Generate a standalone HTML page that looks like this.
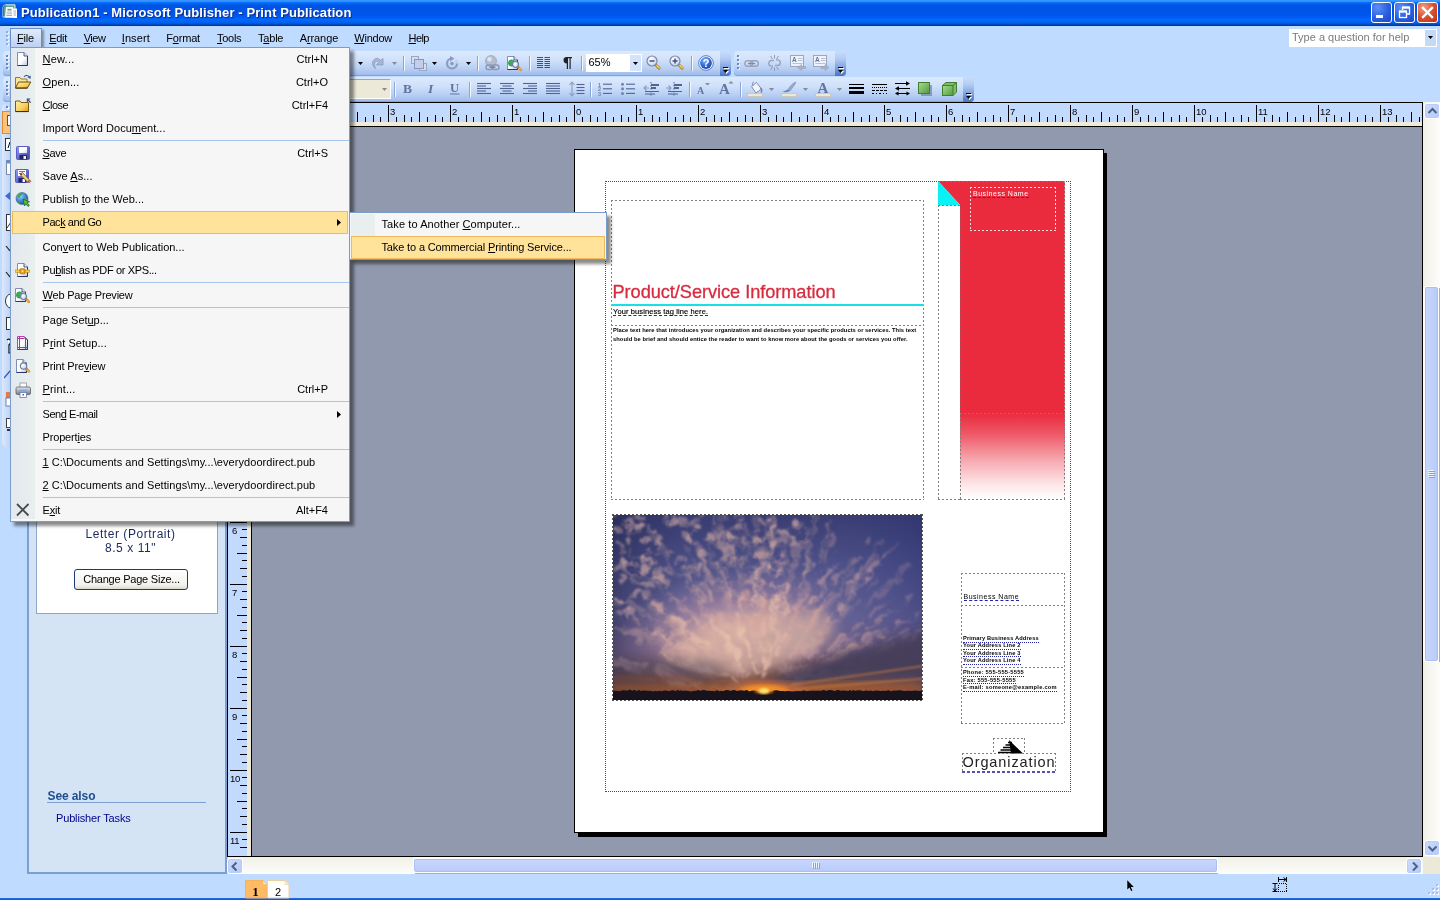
<!DOCTYPE html><html><head><meta charset="utf-8"><title>Publication1 - Microsoft Publisher - Print Publication</title><style>
*{box-sizing:border-box;margin:0;padding:0}
html,body{width:1440px;height:900px;overflow:hidden;background:#bfdbff;font-family:"Liberation Sans",sans-serif;font-size:11px;color:#000}
.abs{position:absolute}
svg{position:absolute;overflow:visible}
#title{left:0;top:0;width:1440px;height:26px;background:linear-gradient(to bottom,#3a96ff 0%,#3593ff 4%,#288eff 6%,#127dff 8%,#036ffc 10%,#0262ee 14%,#0057e5 20%,#0054e3 24%,#0055eb 56%,#005bf5 66%,#026afe 76%,#0062ef 86%,#0052d6 92%,#0040ab 96%,#003092 100%)}
#title .t{left:21px;top:5px;color:#fff;font-weight:bold;font-size:13px;letter-spacing:.1px;text-shadow:1px 1px 1px #0a2a8a;white-space:nowrap}
.tb{top:2px;width:21px;height:21px;border:1px solid #fff;border-radius:3px;background:radial-gradient(circle at 30% 25%,#5d8ff5 0%,#2a5fe0 55%,#1c47c0 100%)}
.tb.x{background:radial-gradient(circle at 30% 25%,#f0a088 0%,#d9502f 50%,#b8321a 100%)}
#menubar{left:0;top:26px;width:1440px;height:22px;background:#bfdbff}
.mi{top:6px;white-space:nowrap}
u{text-decoration:underline;text-underline-offset:1px}
.tbar{height:25px;background:linear-gradient(to bottom,#ddeafd 0%,#d0e1fb 35%,#b9d0f4 70%,#9bb9ea 100%);border-radius:0 4px 4px 0;box-shadow:inset 0 -1px 0 #84a3dc}
.cap{width:11px;height:25px;background:linear-gradient(to bottom,#c9ddfb 0%,#b3ccf4 30%,#8aaae4 60%,#5f87d2 85%,#4a73c2 100%);border-radius:0 4px 4px 0}
.tsep{width:2px;height:15px;border-left:1px solid #8aa5d8;border-right:1px solid #f4f8ff}
#work{left:252px;top:127px;width:1170px;height:729px;background:#9199ae}
#menu{left:10px;top:47px;width:340px;height:475px;background:#f6f6f6;border:1px solid #7a9ccb;box-shadow:4px 4px 3px rgba(0,0,0,.45)}
#menu .strip{left:0px;top:0px;width:24px;height:471px;background:linear-gradient(to right,#e3e9ee,#e9eeee)}
.it{left:31.5px;white-space:nowrap;height:13px;line-height:13px}
.sc{right:21px;white-space:nowrap;height:13px;line-height:13px}
.sep{left:32px;width:306px;height:1px;background:#a6c5ec}
.hl{background:#ffe39b;border:1px solid #f0b95a}
#sub{left:349px;top:212px;width:258px;height:48px;background:#f6f6f6;border:1px solid #7a9ccb;box-shadow:4px 4px 3px rgba(0,0,0,.45)}
#pane{left:27px;top:102px;width:200px;height:772px;background:#d5e4f5;border:2px solid #7b9fd0}
.sbtn{width:16px;height:16px;border:1px solid #fff;border-radius:3px;background:linear-gradient(135deg,#cddcfd,#b5c9f8);box-shadow:0 0 0 1px #b9cdf5 inset}
.thumb{border:1px solid #fff;border-radius:3px;background:#c3d5fd;box-shadow:0 0 0 1px #aac0f3 inset}
.df{border:1px dashed #777}
.pt{white-space:nowrap;position:absolute;line-height:1}
</style></head><body><div id="root" class="abs" style="left:0;top:0;width:1440px;height:900px;overflow:hidden;background:#bfdbff;opacity:.999">
<svg width="0" height="0" style="left:0;top:0"><defs>
<linearGradient id="gPage" x1="0" y1="0" x2="1" y2="1"><stop offset="0" stop-color="#fff"/><stop offset=".55" stop-color="#fdfdff"/><stop offset="1" stop-color="#b9c3e2"/></linearGradient>
<linearGradient id="gFold" x1="0" y1="0" x2="1" y2="1"><stop offset="0" stop-color="#fff1b0"/><stop offset=".6" stop-color="#f7cf5a"/><stop offset="1" stop-color="#d99a1a"/></linearGradient>
<linearGradient id="gFlop" x1="0" y1="0" x2="1" y2="1"><stop offset="0" stop-color="#9a9ef2"/><stop offset=".5" stop-color="#686cd4"/><stop offset="1" stop-color="#4042a2"/></linearGradient>
<linearGradient id="gGray" x1="0" y1="0" x2="0" y2="1"><stop offset="0" stop-color="#e8e8ec"/><stop offset="1" stop-color="#77787e"/></linearGradient>
<radialGradient id="gGlobe" cx=".35" cy=".3" r=".8"><stop offset="0" stop-color="#9ad0ff"/><stop offset=".6" stop-color="#3a7ad0"/><stop offset="1" stop-color="#1f4a9a"/></radialGradient>
<radialGradient id="gLens" cx=".35" cy=".3" r=".8"><stop offset="0" stop-color="#fff"/><stop offset="1" stop-color="#c2d2ec"/></radialGradient>
<radialGradient id="gHelp" cx=".4" cy=".3" r=".8"><stop offset="0" stop-color="#8fc0ff"/><stop offset=".5" stop-color="#2f6fe0"/><stop offset="1" stop-color="#1a3fa0"/></radialGradient>
<linearGradient id="gGreen" x1="0" y1="0" x2="1" y2="1"><stop offset="0" stop-color="#a9dc94"/><stop offset="1" stop-color="#4f9a3a"/></linearGradient>
</defs></svg>
<div id="title" class="abs"><svg width="16" height="16" viewBox="0 0 16 16" style="left:2px;top:4px;"><path d="M1 13V3.500Q1 .8 4 .8h9v12.500z" fill="#6aa396" stroke="#d8eeea" stroke-width="1"/><path d="M1.500 12.500V4Q1.500 1.500 4 1.500" fill="none" stroke="#3f7f72" stroke-width="1.200"/><path d="M11 4.500h4v9.500h-4z" fill="#fff"/><path d="M11.500 7h2.500M11.500 9h2.500M11.500 11h2.500" stroke="#9aa8b0" stroke-width=".9"/><path d="M4 3h7v10.500H3z" fill="#fff"/><rect x="5.500" y="4.800" width="4" height="1.700" fill="#5f9f92"/><path d="M4.800 8h5.200M4.600 9.800h5.400M4.400 11.500h5.600" stroke="#9aa8b0" stroke-width=".9"/></svg><div class="abs t">Publication1 - Microsoft Publisher - Print Publication</div>
<div class="abs tb" style="left:1371px"><svg width="19" height="19" viewBox="0 0 19 19" style=""><rect x="4" y="12" width="7" height="3" fill="#fff"/></svg></div>
<div class="abs tb" style="left:1394px"><svg width="19" height="19" viewBox="0 0 19 19" style=""><path d="M7.500 7V4.500h7v6.500h-2.500" fill="none" stroke="#fff" stroke-width="1.300"/><path d="M7 4.500h8" stroke="#fff" stroke-width="2.200"/><rect x="4.500" y="8.500" width="7" height="6" fill="none" stroke="#fff" stroke-width="1.300"/><path d="M4 8.500h8" stroke="#fff" stroke-width="2.200"/></svg></div>
<div class="abs tb x" style="left:1417px"><svg width="19" height="19" viewBox="0 0 19 19" style=""><path d="M5 5l9 9M14 5l-9 9" stroke="#fff" stroke-width="2.300" stroke-linecap="square"/></svg></div>
</div>
<div id="menubar" class="abs">
<svg width="3" height="16" viewBox="0 0 3 16" style="left:6px;top:5px;"><rect x="1" y="1" width="2" height="2" fill="#fff" opacity=".7"/><rect x="0" y="0" width="2" height="2" fill="#93acdc"/><rect x="1" y="5" width="2" height="2" fill="#fff" opacity=".7"/><rect x="0" y="4" width="2" height="2" fill="#93acdc"/><rect x="1" y="9" width="2" height="2" fill="#fff" opacity=".7"/><rect x="0" y="8" width="2" height="2" fill="#93acdc"/><rect x="1" y="13" width="2" height="2" fill="#fff" opacity=".7"/><rect x="0" y="12" width="2" height="2" fill="#93acdc"/></svg>
<div class="abs" style="left:10px;top:2px;width:32px;height:19px;border:1px solid #6b8fcb;border-bottom:none;background:linear-gradient(to bottom,#e0ebfb,#bdd1f2);box-shadow:2px 2px 2px rgba(0,0,0,.35)"></div>
<div class="abs mi" style="left:17px;letter-spacing:-0.244px"><u>F</u>ile</div>
<div class="abs mi" style="left:49.2px;letter-spacing:-0.302px"><u>E</u>dit</div>
<div class="abs mi" style="left:83.7px;letter-spacing:-0.474px"><u>V</u>iew</div>
<div class="abs mi" style="left:121.7px;letter-spacing:0.123px"><u>I</u>nsert</div>
<div class="abs mi" style="left:166.2px;letter-spacing:-0.181px">F<u>o</u>rmat</div>
<div class="abs mi" style="left:217px;letter-spacing:-0.286px"><u>T</u>ools</div>
<div class="abs mi" style="left:258px;letter-spacing:-0.21px">T<u>a</u>ble</div>
<div class="abs mi" style="left:299.7px;letter-spacing:-0.091px">A<u>r</u>range</div>
<div class="abs mi" style="left:354.3px;letter-spacing:-0.238px"><u>W</u>indow</div>
<div class="abs mi" style="left:408.5px;letter-spacing:-0.581px"><u>H</u>elp</div>
<div class="abs" style="left:1289px;top:3px;width:148px;height:18px;background:#fff;color:#7b7b7b;padding:2px 0 0 3px;white-space:nowrap">Type a question for help</div>
<div class="abs" style="left:1425px;top:4px;width:11px;height:16px;background:#c4d8f8"></div><svg width="5" height="3" viewBox="0 0 5 3" style="left:1428px;top:10px;"><path d="M0 0h5L2.5 3z" fill="#000"/></svg>
</div>
<div class="abs tbar" style="left:3px;top:51px;width:728px;border-radius:4px"></div>
<div class="abs tbar" style="left:3px;top:77px;width:971px;border-radius:4px"></div>
<svg width="3" height="16" viewBox="0 0 3 16" style="left:6px;top:55px;"><rect x="1" y="1" width="2" height="2" fill="#fff" opacity=".7"/><rect x="0" y="0" width="2" height="2" fill="#6f86b8"/><rect x="1" y="5" width="2" height="2" fill="#fff" opacity=".7"/><rect x="0" y="4" width="2" height="2" fill="#6f86b8"/><rect x="1" y="9" width="2" height="2" fill="#fff" opacity=".7"/><rect x="0" y="8" width="2" height="2" fill="#6f86b8"/><rect x="1" y="13" width="2" height="2" fill="#fff" opacity=".7"/><rect x="0" y="12" width="2" height="2" fill="#6f86b8"/></svg>
<svg width="3" height="16" viewBox="0 0 3 16" style="left:6px;top:81px;"><rect x="1" y="1" width="2" height="2" fill="#fff" opacity=".7"/><rect x="0" y="0" width="2" height="2" fill="#6f86b8"/><rect x="1" y="5" width="2" height="2" fill="#fff" opacity=".7"/><rect x="0" y="4" width="2" height="2" fill="#6f86b8"/><rect x="1" y="9" width="2" height="2" fill="#fff" opacity=".7"/><rect x="0" y="8" width="2" height="2" fill="#6f86b8"/><rect x="1" y="13" width="2" height="2" fill="#fff" opacity=".7"/><rect x="0" y="12" width="2" height="2" fill="#6f86b8"/></svg>
<div class="abs cap" style="left:720px;top:51px"></div><svg width="7" height="8" viewBox="0 0 7 8" style="left:722px;top:66px;"><path d="M1 1h5v1h-5zM1 4h5l-2.500 3z" fill="#fff" transform="translate(1,1)"/><path d="M1 1h5v1h-5zM1 4h5l-2.500 3z" fill="#000"/></svg>
<div class="abs tbar" style="left:734px;top:51px;width:112px;border-radius:4px"></div>
<div class="abs cap" style="left:835px;top:51px"></div><svg width="7" height="8" viewBox="0 0 7 8" style="left:837px;top:66px;"><path d="M1 1h5v1h-5zM1 4h5l-2.500 3z" fill="#fff" transform="translate(1,1)"/><path d="M1 1h5v1h-5zM1 4h5l-2.500 3z" fill="#000"/></svg>
<div class="abs cap" style="left:963px;top:77px"></div><svg width="7" height="8" viewBox="0 0 7 8" style="left:965px;top:92px;"><path d="M1 1h5v1h-5zM1 4h5l-2.500 3z" fill="#fff" transform="translate(1,1)"/><path d="M1 1h5v1h-5zM1 4h5l-2.500 3z" fill="#000"/></svg>
<svg width="3" height="16" viewBox="0 0 3 16" style="left:737px;top:55px;"><rect x="1" y="1" width="2" height="2" fill="#fff" opacity=".7"/><rect x="0" y="0" width="2" height="2" fill="#6f86b8"/><rect x="1" y="5" width="2" height="2" fill="#fff" opacity=".7"/><rect x="0" y="4" width="2" height="2" fill="#6f86b8"/><rect x="1" y="9" width="2" height="2" fill="#fff" opacity=".7"/><rect x="0" y="8" width="2" height="2" fill="#6f86b8"/><rect x="1" y="13" width="2" height="2" fill="#fff" opacity=".7"/><rect x="0" y="12" width="2" height="2" fill="#6f86b8"/></svg>
<svg width="5" height="3" viewBox="0 0 5 3" style="left:358.0px;top:62px;"><path d="M0 0h5L2.500 3z" fill="#000"/></svg>
<svg width="13" height="12" viewBox="0 0 13 12" style="left:371px;top:57px;"><path d="M4.500 11.500C1 9 .5 4.500 3.500 2.200 6 .4 8.500 1.500 9.500 3.500L12 1.500v6.500H5.500l2.200-2.500C6.500 4 5.200 3.800 4.300 4.800 3 6.300 3.300 9 4.500 11.500z" fill="#a9b7d6" stroke="#8194bf" stroke-width=".7"/></svg>
<svg width="5" height="3" viewBox="0 0 5 3" style="left:391.5px;top:62px;"><path d="M0 0h5L2.500 3z" fill="#8a8a8a"/></svg>
<div class="abs tsep" style="left:403px;top:56px"></div>
<svg width="16" height="15" viewBox="0 0 16 15" style="left:411px;top:56px;"><rect x=".5" y=".5" width="7" height="7" fill="#d5def0" stroke="#98a7c8"/><rect x="8.500" y="7.500" width="7" height="7" fill="#d5def0" stroke="#98a7c8"/><rect x="3.500" y="3.500" width="9" height="9" fill="#c3cfe8" stroke="#8596bd"/></svg>
<svg width="5" height="3" viewBox="0 0 5 3" style="left:431.5px;top:62px;"><path d="M0 0h5L2.500 3z" fill="#000"/></svg>
<svg width="14" height="14" viewBox="0 0 14 14" style="left:445px;top:56px;"><path d="M7 2.500a5 5 0 1 0 5 5" fill="none" stroke="#8a9bc0" stroke-width="2.200"/><path d="M5 0l4.500 2.500L5 5.500z" fill="#8a9bc0"/><circle cx="7" cy="7.500" r="1.800" fill="#8a9bc0"/><path d="M10 5h3M10.500 7h3" stroke="#b5c2dd" stroke-width="1"/></svg>
<svg width="5" height="3" viewBox="0 0 5 3" style="left:465.5px;top:62px;"><path d="M0 0h5L2.500 3z" fill="#000"/></svg>
<div class="abs tsep" style="left:477px;top:56px"></div>
<svg width="16" height="16" viewBox="0 0 16 16" style="left:484px;top:55px;"><circle cx="7" cy="6" r="5.500" fill="#b4bccf" stroke="#8c97b3" stroke-width=".6"/><circle cx="5.500" cy="4.200" r="2.200" fill="#dfe4ee"/><rect x="2" y="10" width="7" height="4.500" rx="2.200" fill="none" stroke="#8c97b3" stroke-width="1.400"/><rect x="8" y="10" width="7" height="4.500" rx="2.200" fill="none" stroke="#8c97b3" stroke-width="1.400"/><path d="M5.500 12.200h6" stroke="#6f7a99" stroke-width="1.200"/></svg>
<svg width="16" height="16" viewBox="0 0 16 16" style="left:507px;top:55px;"><g transform="translate(-2,0)"><path d="M2.5 1.5h6.5l3.5 3.5v9.500h-10z" fill="url(#gPage)" stroke="#7f8fb8"/><path d="M2.5 14.5h10v-9.500" fill="none" stroke="#27376b"/><path d="M9 1.500v3.500h3.500" fill="#dfe5f5" stroke="#27376b" stroke-width=".8"/></g><circle cx="4.500" cy="8" r="3.200" fill="#3cae5c" stroke="#2a8a4a" stroke-width=".5"/><path d="M1.500 8.500c1-.5 2 .5 2.500 0" stroke="#3a7ad0" fill="none"/><path d="M10.6 11.6l3.200 3.200" stroke="#c8862a" stroke-width="2.600" stroke-linecap="round"/><path d="M12.4 13.4l1.400 1.400" stroke="#f3b552" stroke-width="1.400" stroke-linecap="round"/><circle cx="8.5" cy="9.5" r="3" fill="url(#gLens)" stroke="#6f7f9f" stroke-width="1.200"/></svg>
<div class="abs tsep" style="left:529px;top:56px"></div>
<svg width="13" height="11" viewBox="0 0 13 11" style="left:537px;top:57px;"><path d="M0 0.5h6M7.500 0.5h5.500" stroke="#3f5078" stroke-width="1"/><path d="M0 2.5h6M7.500 2.5h5.500" stroke="#3f5078" stroke-width="1"/><path d="M0 4.5h6M7.500 4.5h5.500" stroke="#3f5078" stroke-width="1"/><path d="M0 6.5h6M7.500 6.5h5.500" stroke="#3f5078" stroke-width="1"/><path d="M0 8.5h6M7.500 8.5h5.500" stroke="#3f5078" stroke-width="1"/><path d="M0 10.5h6M7.500 10.5h5.500" stroke="#3f5078" stroke-width="1"/></svg>
<svg width="10" height="12" viewBox="0 0 10 12" style="left:562px;top:57px;"><path d="M4 0h6v1.200h-1.300V12h-1.200V1.200h-1.500V12h-1.200V6.500A3.300 3.300 0 0 1 4 0z" fill="#222"/></svg>
<div class="abs tsep" style="left:581px;top:56px"></div>
<div class="abs" style="left:586px;top:54px;width:56px;height:18px;background:#fff"></div><div class="abs" style="left:630px;top:55px;width:11px;height:16px;background:#d4e3fb"></div><div class="abs" style="left:588.500px;top:56px;line-height:13px">65%</div>
<svg width="5" height="3" viewBox="0 0 5 3" style="left:633.0px;top:62px;"><path d="M0 0h5L2.500 3z" fill="#000"/></svg>
<svg width="15" height="15" viewBox="0 0 15 15" style="left:646px;top:55px;"><path d="M9.500 9.500l3.600 3.600" stroke="#b98a2e" stroke-width="3" stroke-linecap="round"/><path d="M10.800 10.400l2.300 2.300" stroke="#f2d27a" stroke-width="1.300" stroke-linecap="round"/><circle cx="6" cy="6" r="5" fill="url(#gLens)" stroke="#7d8aa8" stroke-width="1.200"/><path d="M3.500 6h5" stroke="#3f4f86" stroke-width="1.500"/></svg>
<svg width="15" height="15" viewBox="0 0 15 15" style="left:669px;top:55px;"><path d="M9.500 9.500l3.600 3.600" stroke="#b98a2e" stroke-width="3" stroke-linecap="round"/><path d="M10.800 10.400l2.300 2.300" stroke="#f2d27a" stroke-width="1.300" stroke-linecap="round"/><circle cx="6" cy="6" r="5" fill="url(#gLens)" stroke="#7d8aa8" stroke-width="1.200"/><path d="M3.500 6h5" stroke="#3f4f86" stroke-width="1.500"/><path d="M6 3.500v5" stroke="#3f4f86" stroke-width="1.500"/></svg>
<div class="abs tsep" style="left:691px;top:56px"></div>
<svg width="16" height="16" viewBox="0 0 16 16" style="left:698px;top:55px;"><circle cx="8" cy="8" r="7.300" fill="#fff" stroke="#3458b8" stroke-width=".8"/><circle cx="8" cy="8" r="5.900" fill="url(#gHelp)"/><text x="8" y="12" text-anchor="middle" font-family="Liberation Sans" font-weight="bold" font-size="11" fill="#fff">?</text></svg>
<svg width="15" height="7" viewBox="0 0 15 7" style="left:744px;top:60px;"><rect x=".7" y=".7" width="8" height="5.600" rx="2.800" fill="none" stroke="#9aa3ba" stroke-width="1.400"/><rect x="6.300" y=".7" width="8" height="5.600" rx="2.800" fill="none" stroke="#9aa3ba" stroke-width="1.400"/><path d="M4 3.500h7" stroke="#7f89a5" stroke-width="1.200"/></svg>
<svg width="15" height="16" viewBox="0 0 15 16" style="left:767px;top:55px;"><path d="M7 5.500H4.500a2.800 2.800 0 0 0 0 5.600H6M8 10.500h2.500a2.800 2.800 0 0 0 0-5.600H9" fill="none" stroke="#9aa3ba" stroke-width="1.400"/><path d="M7.500 0v3.500M3.500 1l2 3M11.500 1l-2 3M7.500 16v-3.500M3.500 15l2-3M11.500 15l-2-3" stroke="#7f89a5" stroke-width=".8"/></svg>
<svg width="16" height="16" viewBox="0 0 16 16" style="left:790px;top:55px;"><rect x=".5" y=".5" width="13" height="11" fill="#eef2fa" stroke="#9aa6c2"/><text x="2" y="7" font-family="Liberation Sans" font-weight="bold" font-size="6.500" fill="#6a7696">A</text><path d="M8 3.500h4.500M8 5.500h4.500M2.500 8.500h10" stroke="#aab4cc" stroke-width=".8"/><path d="M15.500 11.500h-4V9.500L7.500 12.500l4 3v-2h4z" fill="#a9b3c9" stroke="#8f9ab5" stroke-width=".5"/></svg>
<svg width="16" height="16" viewBox="0 0 16 16" style="left:813px;top:55px;"><rect x=".5" y=".5" width="13" height="11" fill="#eef2fa" stroke="#9aa6c2"/><text x="2" y="7" font-family="Liberation Sans" font-weight="bold" font-size="6.500" fill="#6a7696">A</text><path d="M8 3.500h4.500M8 5.500h4.500M2.500 8.500h10" stroke="#aab4cc" stroke-width=".8"/><path d="M8 11.500h4V9.500l4 3-4 3v-2H8z" fill="#a9b3c9" stroke="#8f9ab5" stroke-width=".5"/></svg>
<div class="abs" style="left:300px;top:79px;width:91px;height:20px;background:#ece9d8;border:1px solid #a9a69a;border-right-color:#fff;border-bottom-color:#fff"></div>
<svg width="5" height="3" viewBox="0 0 5 3" style="left:381.5px;top:88px;"><path d="M0 0h5L2.500 3z" fill="#8a8a8a"/></svg>
<div class="abs tsep" style="left:394px;top:82px"></div>
<svg width="12" height="12" viewBox="0 0 12 12" style="left:403px;top:82px;"><text x="0" y="10.500" font-family="Liberation Serif" font-weight="bold" fill="#62739f" font-size="13.500">B</text></svg>
<svg width="12" height="12" viewBox="0 0 12 12" style="left:427px;top:82px;"><text x="1" y="10.500" font-family="Liberation Serif" font-weight="bold" fill="#62739f" font-style="italic" font-size="13.500">I</text></svg>
<svg width="12" height="13" viewBox="0 0 12 13" style="left:450px;top:82px;"><text x="0" y="9.800" font-family="Liberation Serif" font-weight="bold" fill="#62739f" font-size="12.500">U</text><path d="M0 12h9.500" stroke="#62739f" stroke-width="1"/></svg>
<div class="abs tsep" style="left:469px;top:82px"></div>
<svg width="14" height="12" viewBox="0 0 14 12" style="left:477px;top:83px;"><path d="M0 0.5h14" stroke="#4f6394" stroke-width="1.100"/><path d="M0 3.0h9" stroke="#4f6394" stroke-width="1.100"/><path d="M0 5.5h14" stroke="#4f6394" stroke-width="1.100"/><path d="M0 8.0h9" stroke="#4f6394" stroke-width="1.100"/><path d="M0 10.5h14" stroke="#4f6394" stroke-width="1.100"/></svg>
<svg width="14" height="12" viewBox="0 0 14 12" style="left:500px;top:83px;"><path d="M0 0.5h14" stroke="#4f6394" stroke-width="1.100"/><path d="M2.5 3.0h9" stroke="#4f6394" stroke-width="1.100"/><path d="M0 5.5h14" stroke="#4f6394" stroke-width="1.100"/><path d="M2.5 8.0h9" stroke="#4f6394" stroke-width="1.100"/><path d="M0 10.5h14" stroke="#4f6394" stroke-width="1.100"/></svg>
<svg width="14" height="12" viewBox="0 0 14 12" style="left:523px;top:83px;"><path d="M0 0.5h14" stroke="#4f6394" stroke-width="1.100"/><path d="M5 3.0h9" stroke="#4f6394" stroke-width="1.100"/><path d="M0 5.5h14" stroke="#4f6394" stroke-width="1.100"/><path d="M5 8.0h9" stroke="#4f6394" stroke-width="1.100"/><path d="M0 10.5h14" stroke="#4f6394" stroke-width="1.100"/></svg>
<svg width="14" height="12" viewBox="0 0 14 12" style="left:546px;top:83px;"><path d="M0 0.5h14" stroke="#4f6394" stroke-width="1.100"/><path d="M0 3.0h14" stroke="#4f6394" stroke-width="1.100"/><path d="M0 5.5h14" stroke="#4f6394" stroke-width="1.100"/><path d="M0 8.0h14" stroke="#4f6394" stroke-width="1.100"/><path d="M0 10.5h14" stroke="#4f6394" stroke-width="1.100"/></svg>
<svg width="16" height="16" viewBox="0 0 16 16" style="left:568.5px;top:81px;"><path d="M3 1v14M.5 4L3 1l2.500 3M.5 12L3 15l2.500-3" fill="none" stroke="#8b9bc0" stroke-width="1.100"/><path d="M7.500 3.5h8" stroke="#4f6394" stroke-width="1.100"/><path d="M7.500 6.5h8" stroke="#4f6394" stroke-width="1.100"/><path d="M7.500 9.5h8" stroke="#4f6394" stroke-width="1.100"/><path d="M7.500 12.5h8" stroke="#4f6394" stroke-width="1.100"/></svg>
<div class="abs tsep" style="left:590px;top:82px"></div>
<svg width="14" height="13" viewBox="0 0 14 13" style="left:598px;top:82px;"><text x="0" y="4.5" font-family="Liberation Sans" font-size="5.500" font-weight="bold" fill="#7184b3">1</text><path d="M5 2.2h9" stroke="#4f6394" stroke-width="1.100"/><text x="0" y="9.1" font-family="Liberation Sans" font-size="5.500" font-weight="bold" fill="#7184b3">2</text><path d="M5 6.8h9" stroke="#4f6394" stroke-width="1.100"/><text x="0" y="13.7" font-family="Liberation Sans" font-size="5.500" font-weight="bold" fill="#7184b3">3</text><path d="M5 11.399999999999999h9" stroke="#4f6394" stroke-width="1.100"/></svg>
<svg width="14" height="13" viewBox="0 0 14 13" style="left:621px;top:82px;"><circle cx="1.500" cy="2.2" r="1.500" fill="#7184b3"/><path d="M5 2.2h9" stroke="#4f6394" stroke-width="1.100"/><circle cx="1.500" cy="6.8" r="1.500" fill="#7184b3"/><path d="M5 6.8h9" stroke="#4f6394" stroke-width="1.100"/><circle cx="1.500" cy="11.399999999999999" r="1.500" fill="#7184b3"/><path d="M5 11.399999999999999h9" stroke="#4f6394" stroke-width="1.100"/></svg>
<svg width="16" height="15" viewBox="0 0 16 15" style="left:643px;top:82px;"><path d="M6 6H1M3.500 3.500L1 6l2.500 2.500" fill="none" stroke="#8b9bc0" stroke-width="1.100"/><path d="M8 0v15" stroke="#4f6394" stroke-width="1" stroke-dasharray="1.500 1.500"/><path d="M8 3h8M8 6h5" stroke="#4f6394" stroke-width="1.800"/><path d="M2 9.500h14M2 12h10" stroke="#4f6394" stroke-width="1.100"/></svg>
<svg width="16" height="15" viewBox="0 0 16 15" style="left:666px;top:82px;"><path d="M0 6h5M2.500 3.500L5 6 2.500 8.500" fill="none" stroke="#8b9bc0" stroke-width="1.100"/><path d="M8 0v15" stroke="#4f6394" stroke-width="1" stroke-dasharray="1.500 1.500"/><path d="M8 3h8M8 6h5" stroke="#4f6394" stroke-width="1.800"/><path d="M2 9.500h14M2 12h10" stroke="#4f6394" stroke-width="1.100"/></svg>
<div class="abs tsep" style="left:689px;top:82px"></div>
<svg width="14" height="14" viewBox="0 0 14 14" style="left:697px;top:81px;"><text x="0" y="13" font-family="Liberation Serif" font-weight="bold" fill="#62739f" font-size="10">A</text><path d="M8 2h5l-2.500 2.500z" fill="#8a8a8a"/></svg>
<svg width="16" height="15" viewBox="0 0 16 15" style="left:719px;top:80px;"><text x="0" y="13.500" font-family="Liberation Serif" font-weight="bold" fill="#62739f" font-size="15">A</text><path d="M9.500 3.500h5L12 1z" fill="#8a8a8a"/></svg>
<div class="abs tsep" style="left:740px;top:82px"></div>
<svg width="16" height="16" viewBox="0 0 16 16" style="left:747px;top:81px;"><path d="M4.500 5.500l5-4 5 6.500-5.500 4z" fill="#f2f4fa" stroke="#7d8db5" stroke-width="1"/><path d="M7 1c-1.500 0-2 2-1 4" fill="none" stroke="#7d8db5"/><path d="M13.500 7c1.500 1 1.500 3 .5 4.500" stroke="#6f83ad" stroke-width="1.500" fill="none"/><rect x=".5" y="12.500" width="15" height="3" fill="#ece9d8" stroke="#c9c4ae" stroke-width=".8"/></svg>
<svg width="5" height="3" viewBox="0 0 5 3" style="left:769.0px;top:88px;"><path d="M0 0h5L2.500 3z" fill="#8a8a8a"/></svg>
<svg width="16" height="16" viewBox="0 0 16 16" style="left:781px;top:81px;"><path d="M15 1c-3 1-6 4-8 7.500l2 1.500C11 7 14 4 15 1z" fill="#9aa8c8" stroke="#7d8db5" stroke-width=".6"/><path d="M7 8.500c-2 .5-3 2-5.500 2 1.500 1 4.500 1 7.500-.5z" fill="#6f83ad"/><rect x=".5" y="12.500" width="15" height="3" fill="#ece9d8" stroke="#c9c4ae" stroke-width=".8"/></svg>
<svg width="5" height="3" viewBox="0 0 5 3" style="left:802.5px;top:88px;"><path d="M0 0h5L2.500 3z" fill="#8a8a8a"/></svg>
<svg width="16" height="16" viewBox="0 0 16 16" style="left:815px;top:81px;"><text x="8" y="11.500" text-anchor="middle" font-family="Liberation Serif" font-weight="bold" fill="#62739f" font-size="15">A</text><rect x=".5" y="12.500" width="15" height="3" fill="#ece9d8" stroke="#c9c4ae" stroke-width=".8"/></svg>
<svg width="5" height="3" viewBox="0 0 5 3" style="left:836.5px;top:88px;"><path d="M0 0h5L2.500 3z" fill="#8a8a8a"/></svg>
<svg width="15" height="11" viewBox="0 0 15 11" style="left:849px;top:84px;"><rect x="0" y="0" width="15" height="1" fill="#000"/><rect x="0" y="3" width="15" height="2" fill="#000"/><rect x="0" y="7" width="15" height="3" fill="#000"/></svg>
<svg width="15" height="11" viewBox="0 0 15 11" style="left:872px;top:84px;"><path d="M0 .5h15" stroke="#000"/><path d="M0 3.500h15" stroke="#000" stroke-dasharray="1 1"/><path d="M0 6.500h15" stroke="#000" stroke-dasharray="3 1"/><path d="M0 9.500h15" stroke="#000" stroke-dasharray="2 2 1 2"/></svg>
<svg width="15" height="15" viewBox="0 0 15 15" style="left:895px;top:81px;"><path d="M0 2.500h13M2 7.500h13M1 12.500h13" stroke="#000" stroke-width="1.200"/><path d="M15 2.500l-4-2.200v4.400zM0 7.500l4-2.200v4.400zM0 12.500l3.500-2v4zM15 12.500l-3.500-2v4z" fill="#000"/></svg>
<svg width="15" height="14" viewBox="0 0 15 14" style="left:918px;top:82px;"><rect x="3" y="3" width="11" height="11" fill="#5c6c8c" opacity=".55"/><rect x=".5" y=".5" width="11" height="11" fill="url(#gGreen)" stroke="#3f7f2f"/></svg>
<svg width="15" height="14" viewBox="0 0 15 14" style="left:942px;top:82px;"><path d="M.5 3.500L4 .5h10.500v9.500l-3.500 3.500H.5z" fill="#7dbf68" stroke="#3f7f2f"/><rect x=".5" y="3.500" width="10.500" height="10" fill="url(#gGreen)" stroke="#3f7f2f"/><path d="M11 3.500L14.500 .5" stroke="#3f7f2f"/></svg>
<div class="abs" style="left:227px;top:102px;width:1196px;height:25px;background:#c2dafd;border-top:1px solid #000;border-bottom:1px solid #000"><div class="abs" style="left:0;bottom:0;width:100%;height:4px;background:#efebd7"></div></div>
<svg width="1170" height="19" viewBox="0 0 1170 19" style="left:252px;top:103px;"><g fill="#000"><rect x="4" y="14" width="1" height="5"/><rect x="12" y="2" width="1" height="17"/><rect x="20" y="14" width="1" height="5"/><rect x="28" y="12" width="1" height="7"/><rect x="35" y="14" width="1" height="5"/><rect x="43" y="9" width="1" height="10"/><rect x="51" y="14" width="1" height="5"/><rect x="59" y="12" width="1" height="7"/><rect x="66" y="14" width="1" height="5"/><rect x="74" y="2" width="1" height="17"/><rect x="82" y="14" width="1" height="5"/><rect x="90" y="12" width="1" height="7"/><rect x="97" y="14" width="1" height="5"/><rect x="105" y="9" width="1" height="10"/><rect x="113" y="14" width="1" height="5"/><rect x="121" y="12" width="1" height="7"/><rect x="128" y="14" width="1" height="5"/><rect x="136" y="2" width="1" height="17"/><rect x="144" y="14" width="1" height="5"/><rect x="152" y="12" width="1" height="7"/><rect x="159" y="14" width="1" height="5"/><rect x="167" y="9" width="1" height="10"/><rect x="175" y="14" width="1" height="5"/><rect x="183" y="12" width="1" height="7"/><rect x="190" y="14" width="1" height="5"/><rect x="198" y="2" width="1" height="17"/><rect x="206" y="14" width="1" height="5"/><rect x="214" y="12" width="1" height="7"/><rect x="221" y="14" width="1" height="5"/><rect x="229" y="9" width="1" height="10"/><rect x="237" y="14" width="1" height="5"/><rect x="245" y="12" width="1" height="7"/><rect x="252" y="14" width="1" height="5"/><rect x="260" y="2" width="1" height="17"/><rect x="268" y="14" width="1" height="5"/><rect x="276" y="12" width="1" height="7"/><rect x="283" y="14" width="1" height="5"/><rect x="291" y="9" width="1" height="10"/><rect x="299" y="14" width="1" height="5"/><rect x="307" y="12" width="1" height="7"/><rect x="314" y="14" width="1" height="5"/><rect x="322" y="2" width="1" height="17"/><rect x="330" y="14" width="1" height="5"/><rect x="338" y="12" width="1" height="7"/><rect x="345" y="14" width="1" height="5"/><rect x="353" y="9" width="1" height="10"/><rect x="361" y="14" width="1" height="5"/><rect x="369" y="12" width="1" height="7"/><rect x="376" y="14" width="1" height="5"/><rect x="384" y="2" width="1" height="17"/><rect x="392" y="14" width="1" height="5"/><rect x="400" y="12" width="1" height="7"/><rect x="407" y="14" width="1" height="5"/><rect x="415" y="9" width="1" height="10"/><rect x="423" y="14" width="1" height="5"/><rect x="431" y="12" width="1" height="7"/><rect x="438" y="14" width="1" height="5"/><rect x="446" y="2" width="1" height="17"/><rect x="454" y="14" width="1" height="5"/><rect x="462" y="12" width="1" height="7"/><rect x="469" y="14" width="1" height="5"/><rect x="477" y="9" width="1" height="10"/><rect x="485" y="14" width="1" height="5"/><rect x="493" y="12" width="1" height="7"/><rect x="500" y="14" width="1" height="5"/><rect x="508" y="2" width="1" height="17"/><rect x="516" y="14" width="1" height="5"/><rect x="524" y="12" width="1" height="7"/><rect x="531" y="14" width="1" height="5"/><rect x="539" y="9" width="1" height="10"/><rect x="547" y="14" width="1" height="5"/><rect x="555" y="12" width="1" height="7"/><rect x="562" y="14" width="1" height="5"/><rect x="570" y="2" width="1" height="17"/><rect x="578" y="14" width="1" height="5"/><rect x="586" y="12" width="1" height="7"/><rect x="593" y="14" width="1" height="5"/><rect x="601" y="9" width="1" height="10"/><rect x="609" y="14" width="1" height="5"/><rect x="617" y="12" width="1" height="7"/><rect x="624" y="14" width="1" height="5"/><rect x="632" y="2" width="1" height="17"/><rect x="640" y="14" width="1" height="5"/><rect x="648" y="12" width="1" height="7"/><rect x="655" y="14" width="1" height="5"/><rect x="663" y="9" width="1" height="10"/><rect x="671" y="14" width="1" height="5"/><rect x="679" y="12" width="1" height="7"/><rect x="686" y="14" width="1" height="5"/><rect x="694" y="2" width="1" height="17"/><rect x="702" y="14" width="1" height="5"/><rect x="710" y="12" width="1" height="7"/><rect x="717" y="14" width="1" height="5"/><rect x="725" y="9" width="1" height="10"/><rect x="733" y="14" width="1" height="5"/><rect x="741" y="12" width="1" height="7"/><rect x="748" y="14" width="1" height="5"/><rect x="756" y="2" width="1" height="17"/><rect x="764" y="14" width="1" height="5"/><rect x="772" y="12" width="1" height="7"/><rect x="779" y="14" width="1" height="5"/><rect x="787" y="9" width="1" height="10"/><rect x="795" y="14" width="1" height="5"/><rect x="803" y="12" width="1" height="7"/><rect x="810" y="14" width="1" height="5"/><rect x="818" y="2" width="1" height="17"/><rect x="826" y="14" width="1" height="5"/><rect x="834" y="12" width="1" height="7"/><rect x="841" y="14" width="1" height="5"/><rect x="849" y="9" width="1" height="10"/><rect x="857" y="14" width="1" height="5"/><rect x="865" y="12" width="1" height="7"/><rect x="872" y="14" width="1" height="5"/><rect x="880" y="2" width="1" height="17"/><rect x="888" y="14" width="1" height="5"/><rect x="896" y="12" width="1" height="7"/><rect x="903" y="14" width="1" height="5"/><rect x="911" y="9" width="1" height="10"/><rect x="919" y="14" width="1" height="5"/><rect x="927" y="12" width="1" height="7"/><rect x="934" y="14" width="1" height="5"/><rect x="942" y="2" width="1" height="17"/><rect x="950" y="14" width="1" height="5"/><rect x="958" y="12" width="1" height="7"/><rect x="965" y="14" width="1" height="5"/><rect x="973" y="9" width="1" height="10"/><rect x="981" y="14" width="1" height="5"/><rect x="989" y="12" width="1" height="7"/><rect x="996" y="14" width="1" height="5"/><rect x="1004" y="2" width="1" height="17"/><rect x="1012" y="14" width="1" height="5"/><rect x="1020" y="12" width="1" height="7"/><rect x="1027" y="14" width="1" height="5"/><rect x="1035" y="9" width="1" height="10"/><rect x="1043" y="14" width="1" height="5"/><rect x="1051" y="12" width="1" height="7"/><rect x="1058" y="14" width="1" height="5"/><rect x="1066" y="2" width="1" height="17"/><rect x="1074" y="14" width="1" height="5"/><rect x="1082" y="12" width="1" height="7"/><rect x="1089" y="14" width="1" height="5"/><rect x="1097" y="9" width="1" height="10"/><rect x="1105" y="14" width="1" height="5"/><rect x="1113" y="12" width="1" height="7"/><rect x="1120" y="14" width="1" height="5"/><rect x="1128" y="2" width="1" height="17"/><rect x="1136" y="14" width="1" height="5"/><rect x="1144" y="12" width="1" height="7"/><rect x="1151" y="14" width="1" height="5"/><rect x="1159" y="9" width="1" height="10"/><rect x="1167" y="14" width="1" height="5"/></g></svg>
<div class="abs" style="left:266px;top:107px;font-size:9.500px;line-height:10px">5</div><div class="abs" style="left:328px;top:107px;font-size:9.500px;line-height:10px">4</div><div class="abs" style="left:390px;top:107px;font-size:9.500px;line-height:10px">3</div><div class="abs" style="left:452px;top:107px;font-size:9.500px;line-height:10px">2</div><div class="abs" style="left:514px;top:107px;font-size:9.500px;line-height:10px">1</div><div class="abs" style="left:576px;top:107px;font-size:9.500px;line-height:10px">0</div><div class="abs" style="left:638px;top:107px;font-size:9.500px;line-height:10px">1</div><div class="abs" style="left:700px;top:107px;font-size:9.500px;line-height:10px">2</div><div class="abs" style="left:762px;top:107px;font-size:9.500px;line-height:10px">3</div><div class="abs" style="left:824px;top:107px;font-size:9.500px;line-height:10px">4</div><div class="abs" style="left:886px;top:107px;font-size:9.500px;line-height:10px">5</div><div class="abs" style="left:948px;top:107px;font-size:9.500px;line-height:10px">6</div><div class="abs" style="left:1010px;top:107px;font-size:9.500px;line-height:10px">7</div><div class="abs" style="left:1072px;top:107px;font-size:9.500px;line-height:10px">8</div><div class="abs" style="left:1134px;top:107px;font-size:9.500px;line-height:10px">9</div><div class="abs" style="left:1196px;top:107px;font-size:9.500px;line-height:10px">10</div><div class="abs" style="left:1258px;top:107px;font-size:9.500px;line-height:10px">11</div><div class="abs" style="left:1320px;top:107px;font-size:9.500px;line-height:10px">12</div><div class="abs" style="left:1382px;top:107px;font-size:9.500px;line-height:10px">13</div>
<div class="abs" style="left:227px;top:126px;width:25px;height:731px;background:#c2dafd;border-left:1px solid #000;border-right:1px solid #000;border-bottom:1px solid #000"><div class="abs" style="right:0;top:0;width:4px;height:100%;background:#efebd7"></div></div>
<svg width="18" height="729" viewBox="0 0 18 729" style="left:229px;top:127px;"><g fill="#000"><rect x="1" y="23" width="17" height="1"/><rect x="13" y="30" width="5" height="1"/><rect x="11" y="38" width="7" height="1"/><rect x="13" y="46" width="5" height="1"/><rect x="8" y="54" width="10" height="1"/><rect x="13" y="61" width="5" height="1"/><rect x="11" y="69" width="7" height="1"/><rect x="13" y="77" width="5" height="1"/><rect x="1" y="85" width="17" height="1"/><rect x="13" y="92" width="5" height="1"/><rect x="11" y="100" width="7" height="1"/><rect x="13" y="108" width="5" height="1"/><rect x="8" y="116" width="10" height="1"/><rect x="13" y="123" width="5" height="1"/><rect x="11" y="131" width="7" height="1"/><rect x="13" y="139" width="5" height="1"/><rect x="1" y="147" width="17" height="1"/><rect x="13" y="154" width="5" height="1"/><rect x="11" y="162" width="7" height="1"/><rect x="13" y="170" width="5" height="1"/><rect x="8" y="178" width="10" height="1"/><rect x="13" y="185" width="5" height="1"/><rect x="11" y="193" width="7" height="1"/><rect x="13" y="201" width="5" height="1"/><rect x="1" y="209" width="17" height="1"/><rect x="13" y="216" width="5" height="1"/><rect x="11" y="224" width="7" height="1"/><rect x="13" y="232" width="5" height="1"/><rect x="8" y="240" width="10" height="1"/><rect x="13" y="247" width="5" height="1"/><rect x="11" y="255" width="7" height="1"/><rect x="13" y="263" width="5" height="1"/><rect x="1" y="271" width="17" height="1"/><rect x="13" y="278" width="5" height="1"/><rect x="11" y="286" width="7" height="1"/><rect x="13" y="294" width="5" height="1"/><rect x="8" y="302" width="10" height="1"/><rect x="13" y="309" width="5" height="1"/><rect x="11" y="317" width="7" height="1"/><rect x="13" y="325" width="5" height="1"/><rect x="1" y="333" width="17" height="1"/><rect x="13" y="340" width="5" height="1"/><rect x="11" y="348" width="7" height="1"/><rect x="13" y="356" width="5" height="1"/><rect x="8" y="364" width="10" height="1"/><rect x="13" y="371" width="5" height="1"/><rect x="11" y="379" width="7" height="1"/><rect x="13" y="387" width="5" height="1"/><rect x="1" y="395" width="17" height="1"/><rect x="13" y="402" width="5" height="1"/><rect x="11" y="410" width="7" height="1"/><rect x="13" y="418" width="5" height="1"/><rect x="8" y="426" width="10" height="1"/><rect x="13" y="433" width="5" height="1"/><rect x="11" y="441" width="7" height="1"/><rect x="13" y="449" width="5" height="1"/><rect x="1" y="457" width="17" height="1"/><rect x="13" y="464" width="5" height="1"/><rect x="11" y="472" width="7" height="1"/><rect x="13" y="480" width="5" height="1"/><rect x="8" y="488" width="10" height="1"/><rect x="13" y="495" width="5" height="1"/><rect x="11" y="503" width="7" height="1"/><rect x="13" y="511" width="5" height="1"/><rect x="1" y="519" width="17" height="1"/><rect x="13" y="526" width="5" height="1"/><rect x="11" y="534" width="7" height="1"/><rect x="13" y="542" width="5" height="1"/><rect x="8" y="550" width="10" height="1"/><rect x="13" y="557" width="5" height="1"/><rect x="11" y="565" width="7" height="1"/><rect x="13" y="573" width="5" height="1"/><rect x="1" y="581" width="17" height="1"/><rect x="13" y="588" width="5" height="1"/><rect x="11" y="596" width="7" height="1"/><rect x="13" y="604" width="5" height="1"/><rect x="8" y="612" width="10" height="1"/><rect x="13" y="619" width="5" height="1"/><rect x="11" y="627" width="7" height="1"/><rect x="13" y="635" width="5" height="1"/><rect x="1" y="643" width="17" height="1"/><rect x="13" y="650" width="5" height="1"/><rect x="11" y="658" width="7" height="1"/><rect x="13" y="666" width="5" height="1"/><rect x="8" y="674" width="10" height="1"/><rect x="13" y="681" width="5" height="1"/><rect x="11" y="689" width="7" height="1"/><rect x="13" y="697" width="5" height="1"/><rect x="1" y="705" width="17" height="1"/><rect x="13" y="712" width="5" height="1"/><rect x="11" y="720" width="7" height="1"/></g></svg>
<div class="abs" style="left:232px;top:154px;font-size:9.500px;line-height:10px;letter-spacing:-.4px">0</div><div class="abs" style="left:232px;top:216px;font-size:9.500px;line-height:10px;letter-spacing:-.4px">1</div><div class="abs" style="left:232px;top:278px;font-size:9.500px;line-height:10px;letter-spacing:-.4px">2</div><div class="abs" style="left:232px;top:340px;font-size:9.500px;line-height:10px;letter-spacing:-.4px">3</div><div class="abs" style="left:232px;top:402px;font-size:9.500px;line-height:10px;letter-spacing:-.4px">4</div><div class="abs" style="left:232px;top:464px;font-size:9.500px;line-height:10px;letter-spacing:-.4px">5</div><div class="abs" style="left:232px;top:526px;font-size:9.500px;line-height:10px;letter-spacing:-.4px">6</div><div class="abs" style="left:232px;top:588px;font-size:9.500px;line-height:10px;letter-spacing:-.4px">7</div><div class="abs" style="left:232px;top:650px;font-size:9.500px;line-height:10px;letter-spacing:-.4px">8</div><div class="abs" style="left:232px;top:712px;font-size:9.500px;line-height:10px;letter-spacing:-.4px">9</div><div class="abs" style="left:230px;top:774px;font-size:9.500px;line-height:10px;letter-spacing:-.4px">10</div><div class="abs" style="left:230px;top:836px;font-size:9.500px;line-height:10px;letter-spacing:-.4px">11</div>
<div class="abs" style="left:227px;top:102px;width:25px;height:25px;background:#c2dafd;border:1px solid #000"></div>
<div id="work" class="abs"></div>
<div class="abs" style="left:578px;top:153px;width:529px;height:684px;background:#000"></div>
<div class="abs" style="left:574px;top:149px;width:530px;height:684px;background:#fff;border:1px solid #000"></div>
<div class="abs" style="left:605px;top:181px;width:466px;height:611px;border:1px dotted #1a52be"></div>
<svg width="313" height="300" viewBox="0 0 313 300" style="left:611px;top:200px;"><path d="M0 .5H313M0 299.5H313M.5 0V300M312.5 0V300" fill="none" stroke="#808080" stroke-width="1" stroke-dasharray="2 2"/></svg>
<div class="abs pt" style="left:612.500px;top:283px;font-size:18.200px;color:#d92a3e;letter-spacing:-.05px;-webkit-text-stroke:.3px #d92a3e">Product/Service Information</div>
<div class="abs" style="left:611px;top:304px;width:313px;height:2px;background:#19e0e6"></div>
<div class="abs pt" style="left:613px;top:307.500px;font-size:7.500px;letter-spacing:.1px;color:#000;-webkit-text-stroke:.15px #000;border-bottom:1px dashed #22a">Your business tag line here.</div>
<svg width="313" height="1" viewBox="0 0 313 1" style="left:611px;top:325px;"><path d="M0 .5H313" fill="none" stroke="#808080" stroke-width="1" stroke-dasharray="2 2"/></svg>
<div class="abs pt" style="left:613px;top:326px;font-size:5.780px;font-weight:bold;letter-spacing:.06px;line-height:8.700px;color:#000">Place text here that introduces your organization and describes your specific products or services. This text<br>should be brief and should entice the reader to want to know more about the goods or services you offer.</div>
<svg width="23" height="319" viewBox="0 0 23 319" style="left:938px;top:181px;"><path d="M0 318.5H23M.5 0V319M22.5 0V319" fill="none" stroke="#808080" stroke-width="1" stroke-dasharray="2 2"/></svg>
<div class="abs" style="left:960px;top:181px;width:105px;height:233px;background:#ea2a3d"></div>
<div class="abs" style="left:960px;top:413px;width:105px;height:86px;background:linear-gradient(to bottom,#ea2a3d 0%,#ee5a68 25%,#f6a9b0 55%,#fde9eb 85%,#fff 100%)"></div>
<svg width="105" height="87" viewBox="0 0 105 87" style="left:960px;top:413px;"><path d="M0 .5H105M0 86.5H105M.5 0V87M104.5 0V87" fill="none" stroke="#808080" stroke-width="1" stroke-dasharray="2 2"/></svg>
<svg width="1" height="232" viewBox="0 0 1 232" style="left:1064px;top:181px;"><path d="M.5 0V232" fill="none" stroke="#9a9a9a" stroke-width="1" stroke-dasharray="2 2"/></svg>
<svg width="23" height="25" viewBox="0 0 23 25" style="left:938px;top:181px;"><path d="M0 0h23v25z" fill="#ea2a3d"/><path d="M0 0v24.500h22.500z" fill="#08f2f6"/></svg>
<svg width="127" height="1" viewBox="0 0 127 1" style="left:938px;top:181px;"><path d="M0 .5H127" fill="none" stroke="#8a6a6e" stroke-width="1" stroke-dasharray="2 2"/></svg>
<svg width="23" height="1" viewBox="0 0 23 1" style="left:938px;top:205px;"><path d="M0 .5H23" fill="none" stroke="#3f9a9a" stroke-width="1" stroke-dasharray="2 2"/></svg>
<svg width="1" height="208" viewBox="0 0 1 208" style="left:960px;top:205px;"><path d="M.5 0V208" fill="none" stroke="#b04a58" stroke-width="1" stroke-dasharray="2 2"/></svg>
<svg width="86" height="44" viewBox="0 0 86 44" style="left:970px;top:187px;"><path d="M0 .5H86M0 43.5H86M.5 0V44M85.5 0V44" fill="none" stroke="#fbe0e3" stroke-width="1" stroke-dasharray="2 2"/></svg>
<div class="abs pt" style="left:973px;top:189.500px;font-size:7px;color:#fff;letter-spacing:.5px;border-bottom:1px dashed #3030b0">Business Name</div>
<svg width="311" height="187" viewBox="0 0 311 187" style="left:612px;top:514px;"><path d="M0 .5H311M0 186.5H311M.5 0V187M310.5 0V187" fill="none" stroke="#555" stroke-width="1" stroke-dasharray="2 2"/></svg>
<svg width="309" height="185" viewBox="0 0 309 185" style="left:613px;top:515px;"><defs>
<linearGradient id="sky" x1="0" y1="0" x2="0" y2="1"><stop offset="0" stop-color="#383c74"/><stop offset=".3" stop-color="#51558f"/><stop offset=".55" stop-color="#69669b"/><stop offset=".74" stop-color="#786487"/><stop offset=".86" stop-color="#7d5448"/><stop offset=".94" stop-color="#96583a"/><stop offset="1" stop-color="#7a4526"/></linearGradient>
<linearGradient id="skx" x1="0" y1="0" x2="1" y2="0"><stop offset="0" stop-color="#1a1d48" stop-opacity=".5"/><stop offset=".22" stop-color="#20244f" stop-opacity=".08"/><stop offset=".7" stop-color="#3a3f88" stop-opacity="0"/><stop offset="1" stop-color="#262c70" stop-opacity=".4"/></linearGradient>
<radialGradient id="sun" cx=".5" cy=".5" r=".5"><stop offset="0" stop-color="#fff39a"/><stop offset=".1" stop-color="#ffd548"/><stop offset=".28" stop-color="#f7a32c" stop-opacity=".95"/><stop offset=".6" stop-color="#e27a3a" stop-opacity=".5"/><stop offset="1" stop-color="#c06a6a" stop-opacity="0"/></radialGradient>
<radialGradient id="glow" cx=".5" cy=".5" r=".5"><stop offset="0" stop-color="#f4c6b6" stop-opacity=".8"/><stop offset=".5" stop-color="#d8a2b2" stop-opacity=".4"/><stop offset="1" stop-color="#a888b4" stop-opacity="0"/></radialGradient>
<filter id="b2" x="-20%" y="-20%" width="140%" height="140%"><feGaussianBlur stdDeviation="2.200"/></filter>
<filter id="b1" x="-20%" y="-20%" width="140%" height="140%"><feGaussianBlur stdDeviation=".8"/></filter>
<filter id="b6" x="-30%" y="-30%" width="160%" height="160%"><feGaussianBlur stdDeviation="6"/></filter>
<filter id="cloudy" x="0" y="0" width="100%" height="100%" filterUnits="userSpaceOnUse" primitiveUnits="userSpaceOnUse">
<feTurbulence type="fractalNoise" baseFrequency=".07" numOctaves="3" seed="4" result="n"/>
<feDisplacementMap in="SourceGraphic" in2="n" scale="16" xChannelSelector="R" yChannelSelector="G" result="d"/>
<feGaussianBlur in="d" stdDeviation="1" result="db"/>
<feColorMatrix in="n" type="matrix" values="0 0 0 0 1 0 0 0 0 1 0 0 0 0 1 0 3.6 0 0 -1.020" result="a"/>
<feComposite in="db" in2="a" operator="in"/>
</filter>
<clipPath id="cp"><rect width="309" height="185"/></clipPath>
</defs>
<g clip-path="url(#cp)">
<rect width="309" height="185" fill="url(#sky)"/>
<rect width="309" height="185" fill="url(#skx)"/>
<ellipse cx="112" cy="112" rx="125" ry="58" fill="url(#glow)" transform="rotate(-14 112 112)"/>
<ellipse cx="136" cy="128" rx="88" ry="30" fill="#f2c0a4" opacity=".5" filter="url(#b6)" transform="rotate(-12 136 128)"/>
<g filter="url(#cloudy)"><rect width="309" height="185" fill="none"/><ellipse cx="49.5" cy="23.7" rx="5.7" ry="4.1" fill="#c4a0a4" opacity="0.58"/><ellipse cx="83.8" cy="75.4" rx="4.9" ry="3.5" fill="#c4a0a4" opacity="0.43"/><ellipse cx="16.5" cy="26.1" rx="4.1" ry="3.0" fill="#c4a0a4" opacity="0.61"/><ellipse cx="40.3" cy="92.6" rx="3.3" ry="2.3" fill="#c4a0a4" opacity="0.65"/><ellipse cx="31.3" cy="66.7" rx="5.0" ry="3.5" fill="#c4a0a4" opacity="0.69"/><ellipse cx="110.3" cy="24.4" rx="4.3" ry="3.1" fill="#c4a0a4" opacity="0.47"/><ellipse cx="47.0" cy="65.6" rx="4.9" ry="3.5" fill="#c4a0a4" opacity="0.67"/><ellipse cx="120.3" cy="74.4" rx="5.0" ry="3.6" fill="#c4a0a4" opacity="0.58"/><ellipse cx="2.7" cy="1.5" rx="3.4" ry="2.4" fill="#c4a0a4" opacity="0.41"/><ellipse cx="145.5" cy="41.7" rx="5.7" ry="4.1" fill="#c4a0a4" opacity="0.69"/><ellipse cx="112.0" cy="37.1" rx="3.5" ry="2.5" fill="#c4a0a4" opacity="0.57"/><ellipse cx="116.7" cy="81.6" rx="4.9" ry="3.5" fill="#c4a0a4" opacity="0.69"/><ellipse cx="169.0" cy="19.9" rx="4.7" ry="3.4" fill="#c4a0a4" opacity="0.43"/><ellipse cx="132.6" cy="30.5" rx="5.7" ry="4.1" fill="#c4a0a4" opacity="0.46"/><ellipse cx="118.4" cy="34.3" rx="3.2" ry="2.3" fill="#c4a0a4" opacity="0.45"/><ellipse cx="149.1" cy="41.7" rx="5.6" ry="4.0" fill="#c4a0a4" opacity="0.38"/><ellipse cx="73.1" cy="107.7" rx="4.2" ry="3.0" fill="#c4a0a4" opacity="0.71"/><ellipse cx="11.4" cy="108.7" rx="4.2" ry="3.0" fill="#c4a0a4" opacity="0.59"/><ellipse cx="37.2" cy="84.9" rx="3.7" ry="2.6" fill="#c4a0a4" opacity="0.55"/><ellipse cx="32.4" cy="47.5" rx="5.6" ry="4.0" fill="#c4a0a4" opacity="0.62"/><ellipse cx="30.1" cy="42.2" rx="5.7" ry="4.1" fill="#c4a0a4" opacity="0.69"/><ellipse cx="52.4" cy="107.9" rx="4.3" ry="3.0" fill="#c4a0a4" opacity="0.54"/><ellipse cx="157.3" cy="19.4" rx="5.6" ry="4.0" fill="#c4a0a4" opacity="0.54"/><ellipse cx="90.8" cy="69.4" rx="3.6" ry="2.6" fill="#c4a0a4" opacity="0.44"/><ellipse cx="131.5" cy="24.2" rx="3.3" ry="2.4" fill="#c4a0a4" opacity="0.40"/><ellipse cx="82.5" cy="51.5" rx="5.1" ry="3.6" fill="#c4a0a4" opacity="0.35"/><ellipse cx="124.9" cy="1.5" rx="5.2" ry="3.7" fill="#c4a0a4" opacity="0.62"/><ellipse cx="26.0" cy="12.3" rx="3.0" ry="2.1" fill="#c4a0a4" opacity="0.65"/><ellipse cx="155.8" cy="48.5" rx="3.4" ry="2.5" fill="#c4a0a4" opacity="0.40"/><ellipse cx="3.8" cy="86.7" rx="4.3" ry="3.1" fill="#c4a0a4" opacity="0.75"/><ellipse cx="96.2" cy="83.1" rx="4.0" ry="2.8" fill="#c4a0a4" opacity="0.44"/><ellipse cx="30.3" cy="56.3" rx="5.8" ry="4.1" fill="#c4a0a4" opacity="0.71"/><ellipse cx="59.8" cy="84.7" rx="4.9" ry="3.5" fill="#c4a0a4" opacity="0.35"/><ellipse cx="183.0" cy="22.4" rx="4.7" ry="3.4" fill="#c4a0a4" opacity="0.45"/><ellipse cx="179.8" cy="25.3" rx="5.1" ry="3.7" fill="#c4a0a4" opacity="0.53"/><ellipse cx="12.3" cy="54.6" rx="6.0" ry="4.3" fill="#c4a0a4" opacity="0.44"/><ellipse cx="76.7" cy="23.8" rx="4.3" ry="3.1" fill="#c4a0a4" opacity="0.48"/><ellipse cx="146.4" cy="26.1" rx="3.8" ry="2.7" fill="#c4a0a4" opacity="0.44"/><ellipse cx="183.7" cy="11.5" rx="4.8" ry="3.4" fill="#c4a0a4" opacity="0.45"/><ellipse cx="98.3" cy="69.3" rx="3.0" ry="2.1" fill="#c4a0a4" opacity="0.62"/><ellipse cx="160.0" cy="11.1" rx="3.9" ry="2.8" fill="#c4a0a4" opacity="0.41"/><ellipse cx="172.1" cy="24.4" rx="3.9" ry="2.8" fill="#c4a0a4" opacity="0.42"/><ellipse cx="79.8" cy="71.6" rx="4.1" ry="3.0" fill="#c4a0a4" opacity="0.40"/><ellipse cx="154.4" cy="57.8" rx="4.2" ry="3.0" fill="#c4a0a4" opacity="0.39"/><ellipse cx="17.8" cy="34.5" rx="4.8" ry="3.4" fill="#c4a0a4" opacity="0.41"/><ellipse cx="133.2" cy="69.1" rx="4.1" ry="2.9" fill="#c4a0a4" opacity="0.74"/><ellipse cx="160.2" cy="30.6" rx="4.3" ry="3.1" fill="#c4a0a4" opacity="0.74"/><ellipse cx="1.4" cy="52.8" rx="5.4" ry="3.8" fill="#c4a0a4" opacity="0.75"/><ellipse cx="18.3" cy="57.3" rx="3.1" ry="2.2" fill="#c4a0a4" opacity="0.75"/><ellipse cx="20.3" cy="64.1" rx="5.0" ry="3.6" fill="#c4a0a4" opacity="0.55"/><ellipse cx="72.1" cy="21.1" rx="5.2" ry="3.7" fill="#c4a0a4" opacity="0.54"/><ellipse cx="96.4" cy="22.2" rx="5.3" ry="3.8" fill="#c4a0a4" opacity="0.36"/><ellipse cx="114.3" cy="45.5" rx="6.2" ry="4.4" fill="#c4a0a4" opacity="0.54"/><ellipse cx="167.6" cy="28.5" rx="3.6" ry="2.6" fill="#c4a0a4" opacity="0.55"/><ellipse cx="46.8" cy="29.3" rx="5.0" ry="3.5" fill="#c4a0a4" opacity="0.74"/><ellipse cx="80.0" cy="73.9" rx="4.4" ry="3.2" fill="#c4a0a4" opacity="0.37"/><ellipse cx="32.0" cy="25.6" rx="4.6" ry="3.3" fill="#c4a0a4" opacity="0.70"/><ellipse cx="27.8" cy="38.6" rx="5.2" ry="3.7" fill="#c4a0a4" opacity="0.66"/><ellipse cx="79.4" cy="24.5" rx="6.1" ry="4.4" fill="#c4a0a4" opacity="0.74"/><ellipse cx="119.7" cy="63.1" rx="5.8" ry="4.2" fill="#c4a0a4" opacity="0.53"/><ellipse cx="30.1" cy="39.9" rx="3.2" ry="2.3" fill="#c4a0a4" opacity="0.54"/><ellipse cx="13.3" cy="50.8" rx="5.1" ry="3.7" fill="#c4a0a4" opacity="0.49"/><ellipse cx="45.2" cy="56.7" rx="5.1" ry="3.6" fill="#c4a0a4" opacity="0.50"/><ellipse cx="56.7" cy="57.1" rx="5.4" ry="3.9" fill="#c4a0a4" opacity="0.50"/><ellipse cx="70.5" cy="45.2" rx="4.9" ry="3.5" fill="#c4a0a4" opacity="0.52"/><ellipse cx="154.7" cy="24.2" rx="3.4" ry="2.5" fill="#c4a0a4" opacity="0.64"/><ellipse cx="169.7" cy="37.6" rx="3.0" ry="2.1" fill="#c4a0a4" opacity="0.66"/><ellipse cx="168.3" cy="47.0" rx="4.6" ry="3.3" fill="#c4a0a4" opacity="0.71"/><ellipse cx="124.3" cy="12.5" rx="6.3" ry="4.5" fill="#c4a0a4" opacity="0.50"/><ellipse cx="73.1" cy="62.0" rx="4.1" ry="2.9" fill="#c4a0a4" opacity="0.48"/><ellipse cx="42.0" cy="17.3" rx="4.0" ry="2.8" fill="#c4a0a4" opacity="0.69"/><ellipse cx="57.5" cy="36.0" rx="3.6" ry="2.6" fill="#c4a0a4" opacity="0.71"/><ellipse cx="60.7" cy="9.6" rx="4.5" ry="3.2" fill="#c4a0a4" opacity="0.74"/><ellipse cx="16.6" cy="16.3" rx="3.9" ry="2.8" fill="#c4a0a4" opacity="0.63"/><ellipse cx="141.4" cy="18.3" rx="3.5" ry="2.5" fill="#c4a0a4" opacity="0.51"/><ellipse cx="182.1" cy="29.8" rx="5.1" ry="3.6" fill="#c4a0a4" opacity="0.71"/><ellipse cx="4.8" cy="87.9" rx="4.9" ry="3.5" fill="#c4a0a4" opacity="0.39"/><ellipse cx="139.7" cy="56.5" rx="5.3" ry="3.8" fill="#c4a0a4" opacity="0.58"/><ellipse cx="21.1" cy="57.8" rx="5.1" ry="3.7" fill="#c4a0a4" opacity="0.65"/><ellipse cx="58.9" cy="76.8" rx="3.5" ry="2.5" fill="#c4a0a4" opacity="0.51"/><ellipse cx="29.8" cy="66.6" rx="4.5" ry="3.2" fill="#c4a0a4" opacity="0.75"/><ellipse cx="73.5" cy="50.0" rx="5.3" ry="3.8" fill="#c4a0a4" opacity="0.48"/><ellipse cx="6.4" cy="31.3" rx="4.2" ry="3.0" fill="#c4a0a4" opacity="0.59"/><ellipse cx="143.5" cy="26.0" rx="5.5" ry="4.0" fill="#c4a0a4" opacity="0.67"/><ellipse cx="15.4" cy="11.5" rx="4.2" ry="3.0" fill="#c4a0a4" opacity="0.61"/><ellipse cx="19.7" cy="39.6" rx="3.3" ry="2.3" fill="#c4a0a4" opacity="0.70"/><ellipse cx="6.8" cy="66.2" rx="3.9" ry="2.8" fill="#c4a0a4" opacity="0.61"/><ellipse cx="47.6" cy="93.1" rx="6.3" ry="4.5" fill="#c4a0a4" opacity="0.67"/><ellipse cx="116.4" cy="21.5" rx="6.1" ry="4.4" fill="#c4a0a4" opacity="0.63"/><ellipse cx="91.8" cy="99.5" rx="3.0" ry="2.2" fill="#c4a0a4" opacity="0.46"/><ellipse cx="115.7" cy="65.4" rx="3.6" ry="2.6" fill="#c4a0a4" opacity="0.37"/><ellipse cx="20.2" cy="49.3" rx="3.1" ry="2.2" fill="#c4a0a4" opacity="0.71"/><ellipse cx="81.4" cy="8.3" rx="5.4" ry="3.9" fill="#c4a0a4" opacity="0.39"/><ellipse cx="96.1" cy="23.1" rx="4.9" ry="3.5" fill="#c4a0a4" opacity="0.62"/><ellipse cx="93.2" cy="54.6" rx="3.2" ry="2.3" fill="#c4a0a4" opacity="0.41"/><ellipse cx="89.6" cy="40.4" rx="5.1" ry="3.6" fill="#c4a0a4" opacity="0.69"/><ellipse cx="3.3" cy="15.3" rx="5.8" ry="4.2" fill="#c4a0a4" opacity="0.60"/><ellipse cx="24.8" cy="3.6" rx="5.4" ry="3.9" fill="#c4a0a4" opacity="0.52"/><ellipse cx="84.7" cy="52.8" rx="4.3" ry="3.1" fill="#c4a0a4" opacity="0.44"/><ellipse cx="151.5" cy="52.3" rx="6.1" ry="4.3" fill="#c4a0a4" opacity="0.74"/><ellipse cx="22.2" cy="79.4" rx="6.1" ry="4.4" fill="#c4a0a4" opacity="0.65"/><ellipse cx="127.8" cy="2.4" rx="5.1" ry="3.7" fill="#c4a0a4" opacity="0.64"/><ellipse cx="82.7" cy="15.3" rx="3.9" ry="2.8" fill="#c4a0a4" opacity="0.71"/><ellipse cx="76.1" cy="8.8" rx="3.8" ry="2.7" fill="#c4a0a4" opacity="0.38"/><ellipse cx="14.2" cy="8.0" rx="5.2" ry="3.7" fill="#c4a0a4" opacity="0.56"/><ellipse cx="13.5" cy="98.1" rx="6.0" ry="4.3" fill="#c4a0a4" opacity="0.52"/><ellipse cx="154.6" cy="42.0" rx="4.9" ry="3.5" fill="#c4a0a4" opacity="0.43"/><ellipse cx="184.9" cy="9.2" rx="5.1" ry="3.7" fill="#c4a0a4" opacity="0.74"/><ellipse cx="57.4" cy="3.9" rx="4.2" ry="3.0" fill="#c4a0a4" opacity="0.67"/><ellipse cx="71.6" cy="96.2" rx="3.9" ry="2.8" fill="#c4a0a4" opacity="0.40"/><ellipse cx="111.5" cy="1.3" rx="4.3" ry="3.1" fill="#c4a0a4" opacity="0.43"/><ellipse cx="145.2" cy="54.5" rx="4.5" ry="3.2" fill="#c4a0a4" opacity="0.53"/><ellipse cx="14.4" cy="95.8" rx="3.4" ry="2.4" fill="#c4a0a4" opacity="0.67"/><ellipse cx="7.8" cy="97.3" rx="3.0" ry="2.2" fill="#c4a0a4" opacity="0.36"/><ellipse cx="60.3" cy="108.2" rx="5.7" ry="4.1" fill="#c4a0a4" opacity="0.54"/><ellipse cx="99.4" cy="26.0" rx="4.4" ry="3.2" fill="#c4a0a4" opacity="0.36"/><ellipse cx="43.8" cy="38.7" rx="2.9" ry="2.1" fill="#c4a0a4" opacity="0.39"/><ellipse cx="36.2" cy="35.2" rx="3.6" ry="2.6" fill="#c4a0a4" opacity="0.74"/><ellipse cx="104.7" cy="64.7" rx="3.6" ry="2.6" fill="#c4a0a4" opacity="0.43"/><ellipse cx="23.1" cy="65.0" rx="5.0" ry="3.6" fill="#c4a0a4" opacity="0.36"/><ellipse cx="88.8" cy="1.6" rx="2.9" ry="2.0" fill="#c4a0a4" opacity="0.65"/><ellipse cx="172.8" cy="17.2" rx="4.1" ry="3.0" fill="#c4a0a4" opacity="0.70"/><ellipse cx="32.2" cy="59.1" rx="5.2" ry="3.7" fill="#c4a0a4" opacity="0.46"/><ellipse cx="37.2" cy="71.6" rx="4.7" ry="3.4" fill="#c4a0a4" opacity="0.61"/><ellipse cx="68.8" cy="83.9" rx="5.3" ry="3.8" fill="#c4a0a4" opacity="0.55"/><ellipse cx="149.1" cy="6.0" rx="6.2" ry="4.4" fill="#c4a0a4" opacity="0.73"/><ellipse cx="22.6" cy="13.8" rx="5.4" ry="3.8" fill="#c4a0a4" opacity="0.49"/><ellipse cx="10.3" cy="48.3" rx="5.8" ry="4.1" fill="#c4a0a4" opacity="0.74"/><ellipse cx="144.3" cy="25.7" rx="3.4" ry="2.4" fill="#c4a0a4" opacity="0.41"/><ellipse cx="118.4" cy="22.2" rx="5.1" ry="3.6" fill="#c4a0a4" opacity="0.73"/><ellipse cx="8.4" cy="37.4" rx="3.6" ry="2.6" fill="#c4a0a4" opacity="0.39"/><ellipse cx="135.7" cy="63.5" rx="3.9" ry="2.8" fill="#c4a0a4" opacity="0.55"/><ellipse cx="159.9" cy="13.6" rx="4.0" ry="2.9" fill="#c4a0a4" opacity="0.66"/><ellipse cx="130.6" cy="42.7" rx="5.5" ry="3.9" fill="#c4a0a4" opacity="0.38"/><ellipse cx="39.4" cy="46.9" rx="3.7" ry="2.6" fill="#c4a0a4" opacity="0.68"/><ellipse cx="167.7" cy="39.9" rx="4.3" ry="3.1" fill="#c4a0a4" opacity="0.50"/><ellipse cx="184.6" cy="21.6" rx="6.2" ry="4.4" fill="#c4a0a4" opacity="0.66"/><ellipse cx="47.9" cy="106.9" rx="3.1" ry="2.2" fill="#c4a0a4" opacity="0.38"/><ellipse cx="68.7" cy="7.9" rx="6.0" ry="4.3" fill="#c4a0a4" opacity="0.57"/><path d="M103.2 74.9L81.8 28.8" stroke="#ad909e" stroke-width="5.8" stroke-linecap="round" opacity="0.45"/><path d="M129.9 53.0L121.4 3.8" stroke="#bd9a9e" stroke-width="3.0" stroke-linecap="round" opacity="0.50"/><path d="M219.5 137.2L241.6 123.3" stroke="#c69ca4" stroke-width="4.2" stroke-linecap="round" opacity="0.23"/><path d="M187.9 138.5L224.7 96.0" stroke="#c69ca4" stroke-width="5.1" stroke-linecap="round" opacity="0.46"/><path d="M241.8 136.9L273.3 121.7" stroke="#d6a6a2" stroke-width="2.5" stroke-linecap="round" opacity="0.26"/><path d="M249.1 68.7L284.7 27.8" stroke="#c69ca4" stroke-width="3.2" stroke-linecap="round" opacity="0.27"/><path d="M126.9 142.6L95.0 94.9" stroke="#cf9fa6" stroke-width="4.8" stroke-linecap="round" opacity="0.44"/><path d="M164.0 141.9L170.5 121.4" stroke="#f0c2ac" stroke-width="2.3" stroke-linecap="round" opacity="0.71"/><path d="M120.6 88.6L105.4 44.3" stroke="#f0c2ac" stroke-width="2.3" stroke-linecap="round" opacity="0.55"/><path d="M150.0 120.3L148.8 83.7" stroke="#e6b4a8" stroke-width="4.8" stroke-linecap="round" opacity="0.42"/><path d="M12.9 145.6L-17.3 138.2" stroke="#ad909e" stroke-width="3.6" stroke-linecap="round" opacity="0.46"/><path d="M179.1 89.6L183.5 74.8" stroke="#dba69f" stroke-width="2.2" stroke-linecap="round" opacity="0.52"/><path d="M119.0 173.3L93.4 168.2" stroke="#cf9fa6" stroke-width="5.3" stroke-linecap="round" opacity="0.51"/><path d="M179.7 97.3L195.6 49.9" stroke="#f0c2ac" stroke-width="2.4" stroke-linecap="round" opacity="0.59"/><path d="M286.3 131.3L304.2 124.8" stroke="#e0b0a0" stroke-width="3.4" stroke-linecap="round" opacity="0.38"/><path d="M202.0 49.2L216.1 12.3" stroke="#e0b0a0" stroke-width="3.2" stroke-linecap="round" opacity="0.31"/><path d="M71.1 119.9L33.0 91.6" stroke="#c4a09c" stroke-width="3.2" stroke-linecap="round" opacity="0.32"/><path d="M289.6 124.8L325.8 110.3" stroke="#c69ca4" stroke-width="3.6" stroke-linecap="round" opacity="0.32"/><path d="M169.7 132.1L185.1 90.6" stroke="#d6a6a2" stroke-width="2.6" stroke-linecap="round" opacity="0.65"/><path d="M168.9 137.9L190.9 83.0" stroke="#c69ca4" stroke-width="4.3" stroke-linecap="round" opacity="0.58"/><path d="M126.8 160.1L99.7 138.7" stroke="#cf9fa6" stroke-width="2.6" stroke-linecap="round" opacity="0.48"/><path d="M158.8 30.2L161.2 -23.1" stroke="#c4a09c" stroke-width="5.9" stroke-linecap="round" opacity="0.46"/><path d="M117.1 131.3L101.2 109.0" stroke="#dba69f" stroke-width="3.9" stroke-linecap="round" opacity="0.37"/><path d="M77.9 132.2L58.5 119.7" stroke="#f0c2ac" stroke-width="5.7" stroke-linecap="round" opacity="0.36"/><path d="M146.5 94.2L143.9 54.6" stroke="#e6b4a8" stroke-width="4.0" stroke-linecap="round" opacity="0.57"/><path d="M68.6 108.8L34.4 79.7" stroke="#c4a09c" stroke-width="5.0" stroke-linecap="round" opacity="0.44"/><path d="M83.5 71.6L69.2 48.8" stroke="#ad909e" stroke-width="5.9" stroke-linecap="round" opacity="0.34"/><path d="M50.8 157.0L10.7 147.8" stroke="#ad909e" stroke-width="2.0" stroke-linecap="round" opacity="0.53"/><path d="M173.3 130.3L184.4 104.5" stroke="#e0b0a0" stroke-width="4.0" stroke-linecap="round" opacity="0.47"/><path d="M97.2 78.4L72.4 32.4" stroke="#bd9a9e" stroke-width="3.4" stroke-linecap="round" opacity="0.52"/><path d="M66.7 60.5L33.0 13.2" stroke="#ad909e" stroke-width="4.1" stroke-linecap="round" opacity="0.47"/><path d="M197.5 132.5L234.5 94.0" stroke="#d6a6a2" stroke-width="3.1" stroke-linecap="round" opacity="0.43"/><path d="M124.6 149.9L90.9 112.9" stroke="#cf9fa6" stroke-width="4.3" stroke-linecap="round" opacity="0.46"/><path d="M120.8 51.3L114.4 24.8" stroke="#bd9a9e" stroke-width="6.0" stroke-linecap="round" opacity="0.29"/><path d="M160.2 76.5L162.2 51.7" stroke="#e6b4a8" stroke-width="4.7" stroke-linecap="round" opacity="0.62"/><path d="M112.4 174.9L57.8 168.0" stroke="#dba69f" stroke-width="2.4" stroke-linecap="round" opacity="0.53"/><path d="M135.8 109.0L129.0 78.9" stroke="#e6b4a8" stroke-width="4.7" stroke-linecap="round" opacity="0.54"/><path d="M235.5 71.1L244.6 59.2" stroke="#e0b0a0" stroke-width="3.6" stroke-linecap="round" opacity="0.38"/><path d="M53.8 132.9L18.1 115.7" stroke="#ad909e" stroke-width="5.9" stroke-linecap="round" opacity="0.47"/><path d="M230.4 135.9L256.8 121.0" stroke="#e0b0a0" stroke-width="4.3" stroke-linecap="round" opacity="0.44"/><path d="M169.7 55.9L175.9 12.5" stroke="#bd9a9e" stroke-width="3.5" stroke-linecap="round" opacity="0.29"/><path d="M171.6 101.4L177.4 78.2" stroke="#e6b4a8" stroke-width="2.5" stroke-linecap="round" opacity="0.44"/><path d="M135.1 173.4L116.6 166.2" stroke="#f4ccb4" stroke-width="4.3" stroke-linecap="round" opacity="0.63"/><path d="M204.8 57.2L220.8 20.1" stroke="#c69ca4" stroke-width="3.7" stroke-linecap="round" opacity="0.38"/><path d="M148.7 68.6L147.8 36.3" stroke="#bd9a9e" stroke-width="5.4" stroke-linecap="round" opacity="0.46"/><path d="M234.3 57.6L255.1 26.6" stroke="#e0b0a0" stroke-width="3.7" stroke-linecap="round" opacity="0.36"/><path d="M214.1 53.7L223.6 34.5" stroke="#b493a4" stroke-width="2.1" stroke-linecap="round" opacity="0.31"/><path d="M185.7 167.4L216.3 156.0" stroke="#e0b0a0" stroke-width="3.9" stroke-linecap="round" opacity="0.34"/><path d="M151.7 157.1L151.1 120.1" stroke="#f0c2ac" stroke-width="5.4" stroke-linecap="round" opacity="0.49"/><path d="M121.1 105.5L104.3 64.8" stroke="#e6b4a8" stroke-width="4.4" stroke-linecap="round" opacity="0.30"/><path d="M197.6 148.8L236.3 122.3" stroke="#d6a6a2" stroke-width="4.5" stroke-linecap="round" opacity="0.38"/><path d="M187.0 69.0L199.5 29.4" stroke="#c4a09c" stroke-width="2.1" stroke-linecap="round" opacity="0.43"/><path d="M133.5 153.6L107.1 116.1" stroke="#cf9fa6" stroke-width="2.8" stroke-linecap="round" opacity="0.68"/><path d="M163.0 86.7L168.5 40.1" stroke="#cf9fa6" stroke-width="4.5" stroke-linecap="round" opacity="0.57"/><path d="M81.8 139.9L42.1 117.3" stroke="#f0c2ac" stroke-width="4.9" stroke-linecap="round" opacity="0.46"/><path d="M109.6 140.3L98.6 129.9" stroke="#f4ccb4" stroke-width="5.1" stroke-linecap="round" opacity="0.45"/><path d="M45.4 92.0L28.9 78.4" stroke="#ad909e" stroke-width="3.9" stroke-linecap="round" opacity="0.51"/><path d="M63.9 167.0L30.2 162.0" stroke="#e6b4a8" stroke-width="4.2" stroke-linecap="round" opacity="0.31"/><path d="M231.0 81.6L262.6 42.1" stroke="#d6a6a2" stroke-width="4.7" stroke-linecap="round" opacity="0.25"/><path d="M155.0 153.1L158.8 120.1" stroke="#e6b4a8" stroke-width="3.9" stroke-linecap="round" opacity="0.74"/><path d="M219.0 101.5L256.6 57.5" stroke="#c69ca4" stroke-width="4.8" stroke-linecap="round" opacity="0.44"/><path d="M105.0 120.5L90.6 102.3" stroke="#dba69f" stroke-width="2.7" stroke-linecap="round" opacity="0.33"/><path d="M212.5 111.6L242.1 78.1" stroke="#e0b0a0" stroke-width="5.0" stroke-linecap="round" opacity="0.22"/><path d="M117.7 69.2L101.6 17.1" stroke="#c4a09c" stroke-width="2.5" stroke-linecap="round" opacity="0.27"/><path d="M104.6 112.4L86.8 87.1" stroke="#e6b4a8" stroke-width="4.6" stroke-linecap="round" opacity="0.35"/><path d="M196.1 98.0L217.6 57.9" stroke="#c69ca4" stroke-width="3.2" stroke-linecap="round" opacity="0.37"/><path d="M140.1 129.8L128.8 82.4" stroke="#dba69f" stroke-width="4.1" stroke-linecap="round" opacity="0.65"/><path d="M82.1 145.7L52.9 131.4" stroke="#e6b4a8" stroke-width="2.5" stroke-linecap="round" opacity="0.55"/><path d="M245.9 130.5L262.8 121.6" stroke="#b493a4" stroke-width="2.5" stroke-linecap="round" opacity="0.27"/><path d="M77.6 147.0L50.6 135.0" stroke="#e6b4a8" stroke-width="5.2" stroke-linecap="round" opacity="0.50"/><path d="M182.8 53.7L196.4 -2.1" stroke="#bd9a9e" stroke-width="3.7" stroke-linecap="round" opacity="0.45"/><path d="M274.6 116.0L307.5 98.8" stroke="#b493a4" stroke-width="2.8" stroke-linecap="round" opacity="0.25"/><path d="M190.1 131.1L216.3 97.5" stroke="#b493a4" stroke-width="3.4" stroke-linecap="round" opacity="0.35"/><path d="M109.1 130.8L90.5 109.4" stroke="#f0c2ac" stroke-width="4.5" stroke-linecap="round" opacity="0.52"/><path d="M120.0 92.0L103.4 46.6" stroke="#e6b4a8" stroke-width="3.6" stroke-linecap="round" opacity="0.29"/><path d="M183.4 149.5L210.0 123.6" stroke="#e0b0a0" stroke-width="5.7" stroke-linecap="round" opacity="0.25"/><path d="M151.6 44.6L151.5 1.7" stroke="#c4a09c" stroke-width="3.7" stroke-linecap="round" opacity="0.37"/><path d="M225.7 106.2L238.5 93.4" stroke="#b493a4" stroke-width="5.5" stroke-linecap="round" opacity="0.25"/><path d="M183.2 135.2L195.9 116.9" stroke="#c69ca4" stroke-width="3.1" stroke-linecap="round" opacity="0.26"/><path d="M92.7 157.5L47.0 140.1" stroke="#e6b4a8" stroke-width="3.3" stroke-linecap="round" opacity="0.58"/><path d="M108.1 112.8L76.6 64.6" stroke="#f0c2ac" stroke-width="2.5" stroke-linecap="round" opacity="0.39"/><path d="M89.3 84.5L77.1 65.8" stroke="#bd9a9e" stroke-width="2.8" stroke-linecap="round" opacity="0.46"/><path d="M101.7 94.1L73.4 45.8" stroke="#ad909e" stroke-width="4.8" stroke-linecap="round" opacity="0.37"/><path d="M152.2 124.6L152.3 76.7" stroke="#dba69f" stroke-width="4.9" stroke-linecap="round" opacity="0.63"/><path d="M185.6 149.2L198.1 137.8" stroke="#e0b0a0" stroke-width="4.4" stroke-linecap="round" opacity="0.26"/><path d="M262.5 131.1L293.1 117.6" stroke="#e0b0a0" stroke-width="2.2" stroke-linecap="round" opacity="0.41"/><path d="M120.3 142.3L87.3 103.2" stroke="#cf9fa6" stroke-width="2.4" stroke-linecap="round" opacity="0.34"/><path d="M166.7 160.2L186.3 133.8" stroke="#e0b0a0" stroke-width="2.2" stroke-linecap="round" opacity="0.55"/><path d="M158.7 77.7L162.3 23.4" stroke="#bd9a9e" stroke-width="5.8" stroke-linecap="round" opacity="0.32"/><path d="M144.1 109.3L139.7 70.7" stroke="#f0c2ac" stroke-width="2.3" stroke-linecap="round" opacity="0.61"/><path d="M282.6 110.4L302.3 99.9" stroke="#c69ca4" stroke-width="2.3" stroke-linecap="round" opacity="0.31"/><path d="M157.1 115.0L159.8 81.1" stroke="#f4ccb4" stroke-width="5.1" stroke-linecap="round" opacity="0.56"/><path d="M60.1 76.3L41.0 54.8" stroke="#bd9a9e" stroke-width="3.8" stroke-linecap="round" opacity="0.40"/><path d="M217.8 131.4L258.1 101.6" stroke="#b493a4" stroke-width="3.1" stroke-linecap="round" opacity="0.30"/><path d="M175.6 163.5L196.9 148.5" stroke="#b493a4" stroke-width="2.3" stroke-linecap="round" opacity="0.60"/><path d="M123.2 133.8L103.6 102.3" stroke="#dba69f" stroke-width="3.0" stroke-linecap="round" opacity="0.65"/><path d="M27.8 127.3L11.1 120.1" stroke="#c4a09c" stroke-width="5.1" stroke-linecap="round" opacity="0.48"/><path d="M118.8 47.8L108.0 4.7" stroke="#ad909e" stroke-width="5.0" stroke-linecap="round" opacity="0.24"/><path d="M238.6 114.2L278.5 83.8" stroke="#d6a6a2" stroke-width="2.1" stroke-linecap="round" opacity="0.36"/><path d="M219.5 74.6L236.9 47.4" stroke="#d6a6a2" stroke-width="2.5" stroke-linecap="round" opacity="0.26"/><path d="M219.5 130.5L243.3 113.0" stroke="#d6a6a2" stroke-width="2.1" stroke-linecap="round" opacity="0.23"/><path d="M184.6 166.7L213.3 155.0" stroke="#d6a6a2" stroke-width="5.4" stroke-linecap="round" opacity="0.34"/><path d="M159.5 114.6L162.9 84.9" stroke="#f4ccb4" stroke-width="2.0" stroke-linecap="round" opacity="0.56"/><path d="M264.5 84.2L285.1 66.6" stroke="#c69ca4" stroke-width="4.4" stroke-linecap="round" opacity="0.26"/><path d="M32.7 150.4L13.0 145.5" stroke="#bd9a9e" stroke-width="3.3" stroke-linecap="round" opacity="0.41"/><path d="M159.5 104.1L164.4 54.8" stroke="#f4ccb4" stroke-width="5.7" stroke-linecap="round" opacity="0.47"/><path d="M150.9 161.8L149.5 141.2" stroke="#e6b4a8" stroke-width="5.4" stroke-linecap="round" opacity="0.47"/><path d="M285.8 146.2L310.6 139.9" stroke="#e0b0a0" stroke-width="4.8" stroke-linecap="round" opacity="0.27"/><path d="M187.9 138.9L203.7 120.7" stroke="#e0b0a0" stroke-width="4.2" stroke-linecap="round" opacity="0.49"/><path d="M100.2 138.4L60.2 106.2" stroke="#e6b4a8" stroke-width="5.3" stroke-linecap="round" opacity="0.54"/><path d="M159.1 143.8L169.1 92.4" stroke="#e6b4a8" stroke-width="4.0" stroke-linecap="round" opacity="0.37"/><path d="M175.8 65.0L181.4 37.9" stroke="#c4a09c" stroke-width="5.7" stroke-linecap="round" opacity="0.42"/><path d="M151.7 91.5L151.7 72.4" stroke="#e6b4a8" stroke-width="2.8" stroke-linecap="round" opacity="0.33"/><path d="M114.4 87.4L95.1 39.5" stroke="#ad909e" stroke-width="2.1" stroke-linecap="round" opacity="0.27"/><path d="M181.4 118.1L197.1 85.2" stroke="#b493a4" stroke-width="4.8" stroke-linecap="round" opacity="0.48"/><path d="M78.0 121.3L33.2 85.9" stroke="#e6b4a8" stroke-width="4.2" stroke-linecap="round" opacity="0.45"/><path d="M99.1 140.7L65.6 115.8" stroke="#f4ccb4" stroke-width="4.7" stroke-linecap="round" opacity="0.39"/><path d="M162.7 161.2L187.3 117.9" stroke="#b493a4" stroke-width="4.4" stroke-linecap="round" opacity="0.49"/><path d="M99.7 165.5L54.2 152.9" stroke="#e6b4a8" stroke-width="2.3" stroke-linecap="round" opacity="0.59"/><path d="M18.1 154.0L-27.0 145.3" stroke="#ad909e" stroke-width="5.4" stroke-linecap="round" opacity="0.40"/><path d="M130.8 101.0L125.8 82.6" stroke="#f0c2ac" stroke-width="2.5" stroke-linecap="round" opacity="0.68"/><path d="M137.3 111.6L134.1 96.8" stroke="#dba69f" stroke-width="3.6" stroke-linecap="round" opacity="0.62"/><path d="M144.4 135.3L136.9 90.4" stroke="#f0c2ac" stroke-width="3.3" stroke-linecap="round" opacity="0.37"/><path d="M99.0 106.0L71.6 67.6" stroke="#e6b4a8" stroke-width="3.5" stroke-linecap="round" opacity="0.35"/><path d="M175.8 132.3L195.0 93.8" stroke="#c69ca4" stroke-width="5.6" stroke-linecap="round" opacity="0.35"/><path d="M158.7 138.1L165.7 94.1" stroke="#f4ccb4" stroke-width="4.3" stroke-linecap="round" opacity="0.64"/><path d="M162.9 106.7L168.6 68.3" stroke="#f0c2ac" stroke-width="5.6" stroke-linecap="round" opacity="0.46"/><path d="M271.9 117.1L298.4 103.2" stroke="#c69ca4" stroke-width="3.7" stroke-linecap="round" opacity="0.20"/><path d="M126.5 85.7L120.4 63.3" stroke="#f4ccb4" stroke-width="2.8" stroke-linecap="round" opacity="0.32"/><path d="M103.8 141.6L89.4 130.1" stroke="#dba69f" stroke-width="5.8" stroke-linecap="round" opacity="0.67"/><path d="M93.1 168.6L40.8 158.5" stroke="#dba69f" stroke-width="4.6" stroke-linecap="round" opacity="0.66"/><path d="M102.5 67.1L81.3 18.7" stroke="#ad909e" stroke-width="2.0" stroke-linecap="round" opacity="0.28"/><path d="M185.3 161.5L222.6 140.8" stroke="#b493a4" stroke-width="2.4" stroke-linecap="round" opacity="0.49"/><path d="M48.8 111.1L9.7 84.9" stroke="#ad909e" stroke-width="5.7" stroke-linecap="round" opacity="0.43"/><path d="M120.8 174.7L101.5 171.4" stroke="#dba69f" stroke-width="2.3" stroke-linecap="round" opacity="0.51"/><path d="M252.8 89.3L296.9 49.5" stroke="#c69ca4" stroke-width="5.1" stroke-linecap="round" opacity="0.25"/><path d="M137.9 114.0L133.7 94.1" stroke="#f0c2ac" stroke-width="4.4" stroke-linecap="round" opacity="0.37"/><path d="M218.1 162.9L247.6 155.2" stroke="#b493a4" stroke-width="5.0" stroke-linecap="round" opacity="0.46"/><path d="M114.7 136.8L101.4 121.5" stroke="#f0c2ac" stroke-width="3.9" stroke-linecap="round" opacity="0.65"/><path d="M196.3 134.7L211.2 119.4" stroke="#d6a6a2" stroke-width="5.6" stroke-linecap="round" opacity="0.42"/><path d="M181.4 124.9L206.4 77.9" stroke="#d6a6a2" stroke-width="4.1" stroke-linecap="round" opacity="0.39"/><path d="M98.5 174.1L51.4 168.9" stroke="#e6b4a8" stroke-width="2.6" stroke-linecap="round" opacity="0.54"/><path d="M156.3 138.5L161.8 85.8" stroke="#dba69f" stroke-width="5.4" stroke-linecap="round" opacity="0.37"/><path d="M191.4 61.3L196.2 46.9" stroke="#c4a09c" stroke-width="5.1" stroke-linecap="round" opacity="0.52"/><path d="M240.0 152.3L295.4 134.9" stroke="#d6a6a2" stroke-width="5.5" stroke-linecap="round" opacity="0.22"/><path d="M247.4 68.7L270.1 42.1" stroke="#d6a6a2" stroke-width="3.9" stroke-linecap="round" opacity="0.37"/><path d="M106.0 59.7L93.1 25.9" stroke="#bd9a9e" stroke-width="2.1" stroke-linecap="round" opacity="0.36"/><path d="M94.2 131.7L62.2 104.9" stroke="#f4ccb4" stroke-width="5.6" stroke-linecap="round" opacity="0.54"/><path d="M171.9 172.8L218.6 156.0" stroke="#b493a4" stroke-width="3.7" stroke-linecap="round" opacity="0.57"/><path d="M190.0 35.0L202.4 -12.4" stroke="#bd9a9e" stroke-width="5.6" stroke-linecap="round" opacity="0.29"/><path d="M242.7 89.6L255.8 76.5" stroke="#b493a4" stroke-width="3.5" stroke-linecap="round" opacity="0.29"/><path d="M194.5 112.2L209.4 88.6" stroke="#d6a6a2" stroke-width="4.7" stroke-linecap="round" opacity="0.45"/><path d="M131.5 160.7L98.0 129.3" stroke="#cf9fa6" stroke-width="2.1" stroke-linecap="round" opacity="0.74"/><path d="M166.2 165.3L202.7 127.8" stroke="#b493a4" stroke-width="5.8" stroke-linecap="round" opacity="0.31"/><path d="M237.2 69.6L272.2 24.4" stroke="#c69ca4" stroke-width="2.1" stroke-linecap="round" opacity="0.33"/><path d="M183.2 163.5L222.5 142.7" stroke="#c69ca4" stroke-width="3.3" stroke-linecap="round" opacity="0.30"/><path d="M131.7 34.7L125.2 -11.4" stroke="#bd9a9e" stroke-width="2.4" stroke-linecap="round" opacity="0.24"/><path d="M163.4 123.1L174.3 68.3" stroke="#cf9fa6" stroke-width="4.2" stroke-linecap="round" opacity="0.69"/><path d="M208.0 105.6L224.1 84.2" stroke="#b493a4" stroke-width="4.2" stroke-linecap="round" opacity="0.25"/><path d="M148.2 68.9L147.7 53.5" stroke="#cf9fa6" stroke-width="5.1" stroke-linecap="round" opacity="0.35"/><path d="M120.4 142.4L101.9 120.3" stroke="#dba69f" stroke-width="5.2" stroke-linecap="round" opacity="0.35"/><path d="M166.9 118.1L170.7 102.6" stroke="#cf9fa6" stroke-width="3.2" stroke-linecap="round" opacity="0.37"/><path d="M266.1 103.1L299.8 80.4" stroke="#b493a4" stroke-width="3.1" stroke-linecap="round" opacity="0.39"/><path d="M170.2 144.4L196.2 93.7" stroke="#b493a4" stroke-width="2.3" stroke-linecap="round" opacity="0.35"/><path d="M218.3 105.5L231.2 90.9" stroke="#e0b0a0" stroke-width="4.1" stroke-linecap="round" opacity="0.44"/><path d="M203.8 141.9L233.8 119.8" stroke="#c69ca4" stroke-width="4.3" stroke-linecap="round" opacity="0.40"/><path d="M260.4 138.8L279.3 131.5" stroke="#e0b0a0" stroke-width="5.5" stroke-linecap="round" opacity="0.44"/><path d="M181.9 134.6L209.5 92.6" stroke="#e0b0a0" stroke-width="5.0" stroke-linecap="round" opacity="0.31"/><path d="M200.8 164.1L222.2 157.2" stroke="#e0b0a0" stroke-width="5.2" stroke-linecap="round" opacity="0.44"/><path d="M25.4 123.1L-22.6 101.5" stroke="#ad909e" stroke-width="4.4" stroke-linecap="round" opacity="0.23"/><path d="M88.2 113.6L77.5 102.4" stroke="#f4ccb4" stroke-width="2.2" stroke-linecap="round" opacity="0.48"/><path d="M130.9 170.2L93.2 152.8" stroke="#f4ccb4" stroke-width="2.5" stroke-linecap="round" opacity="0.63"/><path d="M133.4 136.6L110.7 83.5" stroke="#e6b4a8" stroke-width="2.4" stroke-linecap="round" opacity="0.61"/><path d="M144.0 157.8L127.9 113.4" stroke="#f4ccb4" stroke-width="3.2" stroke-linecap="round" opacity="0.75"/><path d="M134.3 159.4L105.6 126.2" stroke="#e6b4a8" stroke-width="5.4" stroke-linecap="round" opacity="0.53"/><path d="M186.8 110.4L199.5 84.9" stroke="#e0b0a0" stroke-width="5.5" stroke-linecap="round" opacity="0.50"/><path d="M77.3 153.0L56.6 145.5" stroke="#f0c2ac" stroke-width="2.9" stroke-linecap="round" opacity="0.42"/><path d="M121.2 107.9L112.7 87.9" stroke="#cf9fa6" stroke-width="6.0" stroke-linecap="round" opacity="0.47"/><path d="M142.3 110.6L139.0 87.0" stroke="#dba69f" stroke-width="5.7" stroke-linecap="round" opacity="0.59"/><path d="M157.8 86.5L161.3 30.6" stroke="#f0c2ac" stroke-width="2.6" stroke-linecap="round" opacity="0.46"/><path d="M138.4 37.1L136.1 12.5" stroke="#bd9a9e" stroke-width="3.0" stroke-linecap="round" opacity="0.35"/><path d="M52.2 99.3L30.2 81.6" stroke="#c4a09c" stroke-width="2.4" stroke-linecap="round" opacity="0.38"/><path d="M76.6 138.3L44.3 120.5" stroke="#e6b4a8" stroke-width="4.8" stroke-linecap="round" opacity="0.64"/><path d="M252.5 115.1L277.8 98.7" stroke="#e0b0a0" stroke-width="2.4" stroke-linecap="round" opacity="0.40"/><path d="M144.3 156.7L125.8 100.9" stroke="#f0c2ac" stroke-width="3.5" stroke-linecap="round" opacity="0.66"/><path d="M192.0 120.2L208.5 95.4" stroke="#d6a6a2" stroke-width="2.4" stroke-linecap="round" opacity="0.32"/><path d="M206.6 40.5L218.8 9.4" stroke="#d6a6a2" stroke-width="2.3" stroke-linecap="round" opacity="0.27"/><path d="M32.9 152.1L-21.0 139.5" stroke="#bd9a9e" stroke-width="4.0" stroke-linecap="round" opacity="0.38"/><path d="M218.4 148.2L270.1 123.4" stroke="#d6a6a2" stroke-width="4.2" stroke-linecap="round" opacity="0.41"/><path d="M178.4 119.7L185.8 102.8" stroke="#c69ca4" stroke-width="3.5" stroke-linecap="round" opacity="0.64"/><path d="M226.9 132.1L242.7 122.0" stroke="#b493a4" stroke-width="5.9" stroke-linecap="round" opacity="0.34"/><path d="M200.0 103.0L231.0 53.1" stroke="#c69ca4" stroke-width="3.7" stroke-linecap="round" opacity="0.43"/><path d="M116.6 175.6L72.4 170.2" stroke="#dba69f" stroke-width="2.7" stroke-linecap="round" opacity="0.48"/><path d="M79.7 130.1L62.2 118.0" stroke="#cf9fa6" stroke-width="2.2" stroke-linecap="round" opacity="0.41"/><path d="M123.1 60.1L112.8 17.7" stroke="#bd9a9e" stroke-width="3.0" stroke-linecap="round" opacity="0.47"/><path d="M197.4 114.0L225.2 73.5" stroke="#c69ca4" stroke-width="4.4" stroke-linecap="round" opacity="0.38"/><path d="M156.9 36.7L158.5 -12.9" stroke="#bd9a9e" stroke-width="3.8" stroke-linecap="round" opacity="0.25"/><path d="M174.5 160.4L200.9 137.3" stroke="#c69ca4" stroke-width="4.5" stroke-linecap="round" opacity="0.53"/><path d="M149.9 122.7L148.0 67.9" stroke="#e6b4a8" stroke-width="4.5" stroke-linecap="round" opacity="0.52"/><path d="M141.1 136.1L137.2 120.5" stroke="#cf9fa6" stroke-width="4.3" stroke-linecap="round" opacity="0.63"/><path d="M144.6 46.9L141.5 -9.4" stroke="#c4a09c" stroke-width="3.1" stroke-linecap="round" opacity="0.24"/><path d="M194.6 103.9L208.4 79.3" stroke="#c69ca4" stroke-width="3.5" stroke-linecap="round" opacity="0.40"/><path d="M252.6 77.5L264.1 65.7" stroke="#c69ca4" stroke-width="3.9" stroke-linecap="round" opacity="0.25"/><path d="M58.9 130.9L28.8 115.1" stroke="#cf9fa6" stroke-width="5.4" stroke-linecap="round" opacity="0.38"/><path d="M94.7 117.6L62.9 83.0" stroke="#e6b4a8" stroke-width="4.5" stroke-linecap="round" opacity="0.34"/><path d="M150.7 161.9L147.1 111.4" stroke="#f0c2ac" stroke-width="5.1" stroke-linecap="round" opacity="0.37"/><path d="M136.9 100.2L133.1 80.2" stroke="#dba69f" stroke-width="2.8" stroke-linecap="round" opacity="0.63"/><path d="M229.4 78.8L256.3 43.6" stroke="#c69ca4" stroke-width="3.5" stroke-linecap="round" opacity="0.33"/><path d="M108.9 166.9L84.4 159.4" stroke="#f4ccb4" stroke-width="2.3" stroke-linecap="round" opacity="0.50"/><path d="M137.1 135.0L131.1 116.7" stroke="#f4ccb4" stroke-width="4.2" stroke-linecap="round" opacity="0.67"/><path d="M159.5 71.7L160.8 54.0" stroke="#e6b4a8" stroke-width="3.0" stroke-linecap="round" opacity="0.32"/><path d="M170.3 172.2L215.8 152.7" stroke="#b493a4" stroke-width="2.4" stroke-linecap="round" opacity="0.57"/><path d="M77.0 152.1L50.8 142.4" stroke="#f4ccb4" stroke-width="2.3" stroke-linecap="round" opacity="0.54"/><path d="M66.9 129.3L26.3 105.2" stroke="#f4ccb4" stroke-width="5.4" stroke-linecap="round" opacity="0.34"/><path d="M114.2 113.3L95.7 80.6" stroke="#f0c2ac" stroke-width="5.9" stroke-linecap="round" opacity="0.37"/><path d="M127.3 47.1L123.2 24.7" stroke="#bd9a9e" stroke-width="3.6" stroke-linecap="round" opacity="0.37"/><path d="M204.6 78.6L219.5 49.8" stroke="#d6a6a2" stroke-width="2.7" stroke-linecap="round" opacity="0.56"/><path d="M124.8 142.1L105.5 115.2" stroke="#cf9fa6" stroke-width="3.8" stroke-linecap="round" opacity="0.74"/><path d="M197.8 105.7L210.4 85.2" stroke="#e0b0a0" stroke-width="4.8" stroke-linecap="round" opacity="0.43"/><path d="M25.9 121.4L-20.1 100.0" stroke="#ad909e" stroke-width="3.7" stroke-linecap="round" opacity="0.48"/><path d="M119.5 57.2L107.2 10.8" stroke="#bd9a9e" stroke-width="4.9" stroke-linecap="round" opacity="0.33"/><path d="M214.6 92.0L243.4 51.6" stroke="#c69ca4" stroke-width="2.8" stroke-linecap="round" opacity="0.28"/><path d="M237.4 132.0L264.7 116.7" stroke="#e0b0a0" stroke-width="2.6" stroke-linecap="round" opacity="0.26"/><path d="M128.6 71.4L116.5 15.0" stroke="#ad909e" stroke-width="5.0" stroke-linecap="round" opacity="0.42"/><path d="M26.2 155.9L-2.9 150.3" stroke="#bd9a9e" stroke-width="5.7" stroke-linecap="round" opacity="0.40"/><path d="M194.0 37.6L207.5 -8.0" stroke="#c4a09c" stroke-width="3.5" stroke-linecap="round" opacity="0.28"/><path d="M113.5 50.7L105.0 22.1" stroke="#c4a09c" stroke-width="5.9" stroke-linecap="round" opacity="0.29"/><path d="M161.2 104.4L167.4 52.8" stroke="#f0c2ac" stroke-width="2.9" stroke-linecap="round" opacity="0.33"/><path d="M136.7 60.5L132.1 24.0" stroke="#ad909e" stroke-width="2.3" stroke-linecap="round" opacity="0.44"/><path d="M251.8 124.1L280.8 107.8" stroke="#d6a6a2" stroke-width="3.3" stroke-linecap="round" opacity="0.27"/><path d="M132.9 151.5L111.6 119.6" stroke="#e6b4a8" stroke-width="2.3" stroke-linecap="round" opacity="0.36"/><path d="M142.1 100.6L137.7 66.0" stroke="#f0c2ac" stroke-width="2.6" stroke-linecap="round" opacity="0.53"/><path d="M110.0 40.1L99.0 3.5" stroke="#bd9a9e" stroke-width="5.5" stroke-linecap="round" opacity="0.39"/><path d="M213.0 150.5L243.2 135.9" stroke="#b493a4" stroke-width="2.6" stroke-linecap="round" opacity="0.26"/><path d="M168.0 137.3L184.0 94.5" stroke="#d6a6a2" stroke-width="3.8" stroke-linecap="round" opacity="0.68"/><path d="M150.2 157.4L145.7 99.1" stroke="#e6b4a8" stroke-width="4.8" stroke-linecap="round" opacity="0.61"/><path d="M97.4 158.0L64.3 144.7" stroke="#f4ccb4" stroke-width="5.6" stroke-linecap="round" opacity="0.46"/><path d="M138.2 51.1L133.9 10.7" stroke="#ad909e" stroke-width="3.8" stroke-linecap="round" opacity="0.30"/><path d="M57.4 75.0L43.6 59.8" stroke="#c4a09c" stroke-width="2.3" stroke-linecap="round" opacity="0.50"/><path d="M181.5 120.7L200.2 83.0" stroke="#c69ca4" stroke-width="4.4" stroke-linecap="round" opacity="0.31"/><path d="M198.4 144.8L230.7 120.2" stroke="#d6a6a2" stroke-width="4.4" stroke-linecap="round" opacity="0.26"/><path d="M241.6 134.0L266.3 121.3" stroke="#d6a6a2" stroke-width="4.6" stroke-linecap="round" opacity="0.32"/><path d="M203.4 83.1L221.6 48.9" stroke="#b493a4" stroke-width="6.0" stroke-linecap="round" opacity="0.54"/><path d="M98.5 61.7L89.0 40.7" stroke="#c4a09c" stroke-width="3.9" stroke-linecap="round" opacity="0.52"/><path d="M218.7 144.0L242.7 131.1" stroke="#e0b0a0" stroke-width="5.7" stroke-linecap="round" opacity="0.50"/><path d="M84.5 163.6L32.4 150.9" stroke="#dba69f" stroke-width="6.0" stroke-linecap="round" opacity="0.35"/><path d="M79.8 126.9L54.8 108.5" stroke="#cf9fa6" stroke-width="2.7" stroke-linecap="round" opacity="0.29"/><path d="M118.0 131.0L104.5 111.5" stroke="#f4ccb4" stroke-width="2.6" stroke-linecap="round" opacity="0.54"/><path d="M208.8 142.8L228.7 129.8" stroke="#b493a4" stroke-width="2.8" stroke-linecap="round" opacity="0.31"/><path d="M143.9 85.7L140.7 48.1" stroke="#f4ccb4" stroke-width="5.6" stroke-linecap="round" opacity="0.39"/><path d="M187.6 87.9L195.6 67.1" stroke="#d6a6a2" stroke-width="5.7" stroke-linecap="round" opacity="0.35"/><path d="M228.2 153.2L251.0 145.2" stroke="#e0b0a0" stroke-width="5.7" stroke-linecap="round" opacity="0.45"/><path d="M202.5 120.3L213.1 107.7" stroke="#c69ca4" stroke-width="2.5" stroke-linecap="round" opacity="0.26"/><path d="M132.0 152.8L99.1 108.1" stroke="#f4ccb4" stroke-width="4.5" stroke-linecap="round" opacity="0.73"/><path d="M47.6 118.2L24.8 104.7" stroke="#c4a09c" stroke-width="2.7" stroke-linecap="round" opacity="0.35"/><path d="M162.9 131.4L175.6 74.5" stroke="#f0c2ac" stroke-width="5.4" stroke-linecap="round" opacity="0.51"/><path d="M167.7 160.2L197.9 122.1" stroke="#c69ca4" stroke-width="5.0" stroke-linecap="round" opacity="0.39"/><path d="M136.0 127.1L131.1 111.2" stroke="#cf9fa6" stroke-width="3.0" stroke-linecap="round" opacity="0.40"/><path d="M54.6 79.5L34.1 58.3" stroke="#ad909e" stroke-width="3.0" stroke-linecap="round" opacity="0.38"/><path d="M51.7 121.1L15.8 100.1" stroke="#c4a09c" stroke-width="3.3" stroke-linecap="round" opacity="0.36"/></g>
<ellipse cx="140" cy="132" rx="70" ry="22" fill="#f8d0b4" opacity=".28" filter="url(#b6)" transform="rotate(-12 140 132)"/>
<path d="M150 170C190 150 250 130 320 116V162C260 162 200 170 150 178z" fill="#443c5a" opacity=".95" filter="url(#b6)"/>
<path d="M48 146c30 14 62 20 100 24l-14 8c-34-6-70-16-86-32z" fill="#55465f" opacity=".75" filter="url(#b2)"/>
<ellipse cx="40" cy="156" rx="75" ry="13" fill="#4a3f58" opacity=".5" filter="url(#b6)"/><path d="M0 160h120v16H0z" fill="#7a4a34" opacity=".5" filter="url(#b2)"/>
<path d="M95 168h214v10H95z" fill="#c56a28" opacity=".5" filter="url(#b6)"/><path d="M0 170h309v7H0z" fill="#a85a2c" opacity=".4" filter="url(#b2)"/>
<path d="M178 170l140-20M182 174l135-11" stroke="#dc8438" stroke-width="2" opacity=".6" filter="url(#b1)"/>
<rect width="309" height="185" fill="#44445a" opacity=".07"/><ellipse cx="151" cy="177" rx="48" ry="15" fill="url(#sun)"/>
<ellipse cx="151" cy="175" rx="24" ry="4" fill="#f08a2a" opacity=".85" filter="url(#b2)"/>
<path d="M0 185V176Q3.3 175.4 6.6 176.2Q10.6 174.6 14.6 175.8Q16.9 173.8 19.3 176.1Q21.5 173.9 23.8 176.5Q25.7 173.9 27.5 176.0Q31.6 174.9 35.6 175.9Q37.5 175.2 39.5 176.4Q42.2 175.7 44.8 176.3Q46.6 175.3 48.3 176.3Q52.3 174.5 56.2 176.3Q59.6 174.1 62.9 176.2Q64.8 174.1 66.6 176.0Q68.2 174.6 69.8 176.2Q71.3 174.9 72.9 175.8Q75.4 175.7 77.9 176.5Q80.7 176.0 83.5 175.8Q85.3 174.3 87.1 176.0Q90.5 174.0 93.8 175.8Q98.0 175.4 102.1 176.3Q104.2 174.0 106.2 176.3Q108.3 175.1 110.3 176.3Q114.0 173.8 117.6 176.1Q120.7 174.1 123.8 175.9Q127.6 174.7 131.5 175.7Q133.9 173.9 136.3 176.5Q140.7 174.6 145.1 176.6Q148.4 174.3 151.8 175.7Q155.2 175.4 158.6 176.5Q162.8 174.4 167.0 176.1Q169.5 175.7 172.0 176.2Q175.9 175.5 179.7 176.5Q184.0 175.6 188.3 176.3Q190.9 175.0 193.4 176.2Q197.1 175.4 200.8 175.8Q204.6 175.8 208.5 175.8Q210.8 174.1 213.1 175.9Q217.4 174.1 221.7 176.3Q224.6 174.2 227.5 175.8Q231.6 175.3 235.6 175.9Q237.1 173.8 238.7 176.4Q240.2 174.1 241.8 175.9Q246.1 174.7 250.3 176.2Q253.2 174.8 256.0 175.9Q257.8 174.8 259.5 176.2Q263.5 174.9 267.5 176.0Q270.3 175.5 273.1 176.0Q275.5 174.1 278.0 176.5Q280.1 174.8 282.2 175.8Q286.6 174.6 290.9 176.1Q294.9 175.7 298.9 175.9Q302.6 175.2 306.3 176.0Q310.8 174.8 315.2 175.9V185z" fill="#17121b"/>
<ellipse cx="151" cy="176.500" rx="10" ry="2.200" fill="#e8802a" opacity=".8" filter="url(#b1)"/><ellipse cx="151" cy="176" rx="5.500" ry="2.800" fill="#ffe86a" filter="url(#b1)"/>
</g></svg>
<svg width="104" height="151" viewBox="0 0 104 151" style="left:961px;top:573px;"><path d="M0 .5H104M0 150.5H104M.5 0V151M103.5 0V151" fill="none" stroke="#808080" stroke-width="1" stroke-dasharray="2 2"/></svg>
<svg width="104" height="1" viewBox="0 0 104 1" style="left:961px;top:605px;"><path d="M0 .5H104" fill="none" stroke="#808080" stroke-width="1" stroke-dasharray="2 2"/></svg>
<svg width="104" height="1" viewBox="0 0 104 1" style="left:961px;top:667px;"><path d="M0 .5H104" fill="none" stroke="#808080" stroke-width="1" stroke-dasharray="2 2"/></svg>
<div class="abs pt" style="left:963.500px;top:593px;font-size:7px;letter-spacing:.5px;border-bottom:1px dashed #22a">Business Name</div>
<div class="abs pt" style="left:963px;top:636.0px;font-size:5.700px;font-weight:bold;letter-spacing:.15px;border-bottom:1px dotted #22a;line-height:5.500px">Primary Business Address</div>
<div class="abs pt" style="left:963px;top:643.4px;font-size:5.700px;font-weight:bold;letter-spacing:.15px;border-bottom:1px dotted #22a;line-height:5.500px">Your Address Line 2</div>
<div class="abs pt" style="left:963px;top:650.8px;font-size:5.700px;font-weight:bold;letter-spacing:.15px;border-bottom:1px dotted #22a;line-height:5.500px">Your Address Line 3</div>
<div class="abs pt" style="left:963px;top:658.2px;font-size:5.700px;font-weight:bold;letter-spacing:.15px;border-bottom:1px dotted #22a;line-height:5.500px">Your Address Line 4</div>
<div class="abs pt" style="left:963px;top:670.3px;font-size:5.700px;font-weight:bold;letter-spacing:.25px;border-bottom:1px dotted #22a;line-height:5.500px">Phone: 555-555-5555</div>
<div class="abs pt" style="left:963px;top:677.7px;font-size:5.700px;font-weight:bold;letter-spacing:.25px;border-bottom:1px dotted #22a;line-height:5.500px">Fax: 555-555-5555</div>
<div class="abs pt" style="left:963px;top:685.1px;font-size:5.700px;font-weight:bold;letter-spacing:.25px;border-bottom:1px dotted #22a;line-height:5.500px">E-mail: someone@example.com</div>
<svg width="32" height="16" viewBox="0 0 32 16" style="left:993px;top:738px;"><path d="M0 .5H32M.5 0V16M31.5 0V16" fill="none" stroke="#808080" stroke-width="1" stroke-dasharray="2 2"/></svg>
<svg width="30" height="15" viewBox="0 0 30 15" style="left:995px;top:739px;"><path d="M14 1l14 13.500H16z" fill="#000"/><path d="M13 3.500h4M10.500 6h7M8 8.500h10M5.500 11h13M3 13.500h16" stroke="#000" stroke-width="1.300"/></svg>
<svg width="94" height="19" viewBox="0 0 94 19" style="left:962px;top:753px;"><path d="M0 .5H94M.5 0V19M93.5 0V19" fill="none" stroke="#808080" stroke-width="1" stroke-dasharray="2 2"/></svg>
<svg width="94" height="2" viewBox="0 0 94 2" style="left:962px;top:771px;"><path d="M0 1H94" stroke="#1a1a9a" stroke-width="1.600" stroke-dasharray="3 2"/></svg>
<div class="abs pt" style="left:962.500px;top:755px;font-size:14.500px;letter-spacing:.9px;color:#222">Organization</div>
<div id="pane" class="abs">
<div class="abs" style="left:7px;top:0;width:182px;height:510px;background:#fff;border:1px solid #8ca5c9"></div>
<div class="abs" style="left:10.500px;top:423px;width:182px;text-align:center;font-size:12px;line-height:14px;color:#1a2a5e;letter-spacing:.55px">Letter (Portrait)<br>8.5 x 11&quot;</div>
<div class="abs" style="left:45px;top:465px;width:114px;height:21px;border:1px solid #1c3a7a;border-radius:3px;background:linear-gradient(to bottom,#fff,#f2f1ec 80%,#dcd9cc);text-align:center;line-height:18px;font-size:11px;letter-spacing:-0.227px;text-indent:1px">Change Page Size...</div>
<div class="abs" style="left:18.500px;top:685px;font-weight:bold;font-size:12px;color:#1f4d8f;white-space:nowrap;letter-spacing:-.1px">See also</div>
<div class="abs" style="left:18px;top:698px;width:159px;height:1px;background:#7b9fd0"></div>
<div class="abs" style="left:27px;top:708px;font-size:11px;color:#00008b;white-space:nowrap;letter-spacing:-.15px">Publisher Tasks</div>
</div>
<div class="abs" style="left:2px;top:104px;width:10px;height:344px;background:linear-gradient(to right,#dce9fc,#b5cdf2);border-radius:4px 0 0 6px"></div>
<svg width="4" height="2" viewBox="0 0 4 2" style="left:6px;top:106px;"><rect x="1" y="1" width="2" height="2" fill="#fff"/><rect width="2" height="2" fill="#5f82c6"/></svg>
<div class="abs" style="left:2px;top:111px;width:9px;height:23px;background:#fbc27a;border:1px solid #e58a2a"></div>
<svg width="6" height="420" viewBox="0 0 6 420" style="left:4px;top:100px;overflow:hidden;"><rect x="3.500" y="15.500" width="6" height="10" fill="#fff" stroke="#555"/><rect x="1.500" y="38.500" width="8" height="12" fill="#fff" stroke="#333"/><path d="M4 48l2-6" stroke="#000"/><rect x="2.500" y="60.500" width="8" height="14" fill="#fff" stroke="#7a8aaa"/><rect x="2.500" y="60.500" width="8" height="3" fill="#6a8ad0"/><path d="M6 92l-5 4 5 4z" fill="#3a6ad8"/><rect x="2.500" y="114.500" width="8" height="16" fill="#fff" stroke="#333"/><path d="M3 128l4-6" stroke="#333"/><path d="M2 146l4 5" stroke="#222" stroke-width="1.200"/><path d="M2 172l4 5" stroke="#222" stroke-width="1.200"/><ellipse cx="7" cy="201" rx="5.500" ry="7" fill="#fff" stroke="#333"/><rect x="2.500" y="217.500" width="8" height="12" fill="#fff" stroke="#333"/><path d="M3 240c3-3 5 2 2 5v8h4" fill="#fff" stroke="#111" stroke-width="1.200"/><path d="M0 278l6-7" stroke="#2a5ac8" stroke-width="1.300"/><rect x="2" y="292" width="5" height="14" fill="#e8784a"/><rect x="2" y="298" width="5" height="8" fill="#fff" stroke="#4a6ab8" stroke-width=".8"/><rect x="2.500" y="318.500" width="6" height="9" fill="#fff" stroke="#444"/><path d="M3 330h3" stroke="#000" stroke-width="1.500"/></svg>
<div class="abs" style="left:1423px;top:102px;width:17px;height:755px;background:linear-gradient(to right,#f1f0e7,#fdfdfa)"></div>
<div class="abs" style="left:228px;top:857px;width:1212px;height:17px;background:linear-gradient(to bottom,#f1f0e7,#fdfdfa)"></div>
<div class="abs" style="left:1423px;top:857px;width:17px;height:17px;background:#ece9d8"></div>
<div class="abs sbtn" style="left:1424px;top:103px"><svg width="11" height="11" viewBox="0 0 11 11" style="left:2px;top:2px;"><path d="M1.500 7L5.500 3 9.500 7" fill="none" stroke="#4d6185" stroke-width="2"/></svg></div>
<div class="abs sbtn" style="left:1424px;top:840px"><svg width="11" height="11" viewBox="0 0 11 11" style="left:2px;top:2px;"><path d="M1.500 3.500L5.500 7.500 9.500 3.500" fill="none" stroke="#4d6185" stroke-width="2"/></svg></div>
<div class="abs sbtn" style="left:227px;top:858px"><svg width="11" height="11" viewBox="0 0 11 11" style="left:2px;top:2px;"><path d="M6.500 1.500L2.500 5.500 6.500 9.500" fill="none" stroke="#4d6185" stroke-width="2"/></svg></div>
<div class="abs sbtn" style="left:1406px;top:858px"><svg width="11" height="11" viewBox="0 0 11 11" style="left:2px;top:2px;"><path d="M4 1.500l4 4L4 9.500" fill="none" stroke="#4d6185" stroke-width="2"/></svg></div>
<div class="abs thumb" style="left:1423px;top:286px;width:16px;height:376px;border-left-width:2px;background:linear-gradient(to right,#c9d7fc,#b7cbf9)"></div><div class="abs" style="left:1439px;top:288px;width:1px;height:374px;background:#9fb0d4"></div>
<svg width="8" height="8" viewBox="0 0 8 8" style="left:1428px;top:470px;"><path d="M0 .5h6M0 2.500h6M0 4.500h6M0 6.500h6" stroke="#eef4fe"/><path d="M1 1.500h6M1 3.500h6M1 5.500h6M1 7.500h6" stroke="#8a9fd8"/></svg>
<div class="abs thumb" style="left:413px;top:857px;width:805px;height:16px;border-top-width:2px;background:linear-gradient(to bottom,#c9d7fc,#b7cbf9)"></div><div class="abs" style="left:415px;top:873px;width:803px;height:1px;background:#9fb0d4"></div>
<svg width="8" height="8" viewBox="0 0 8 8" style="left:812px;top:862px;"><path d="M.5 0v6M2.500 0v6M4.500 0v6M6.500 0v6" stroke="#eef4fe"/><path d="M1.500 1v6M3.500 1v6M5.500 1v6M7.500 1v6" stroke="#8a9fd8"/></svg>
<div class="abs" style="left:0;top:874px;width:1440px;height:24px;background:#bfdbff"></div>
<div class="abs" style="left:0;top:898px;width:1440px;height:2px;background:linear-gradient(to bottom,#2a6ee8,#0a52d8)"></div>
<svg width="46" height="18" viewBox="0 0 46 18" style="left:245px;top:880px;"><path d="M.5 18V.500h17.500l4 4V18z" fill="#fdbb65" stroke="#f6b25c"/><path d="M18 .5v4h4z" fill="#fff0d0" stroke="#f6b25c" stroke-width=".6"/><path d="M22.500 18V.500h17.500l4 4V18z" fill="#fff" stroke="#f1cf98"/><path d="M40 .5v4h4z" fill="#fff0d0" stroke="#f1cf98" stroke-width=".6"/><text x="10.500" y="16" font-family="Liberation Serif" font-weight="bold" font-size="13" text-anchor="middle" fill="#000">1</text><text x="33" y="16" font-family="Liberation Sans" font-size="11" text-anchor="middle" fill="#000">2</text></svg>
<svg width="7" height="11" viewBox="0 0 7 11" style="left:1127px;top:880px;"><path d="M.3 .3v9.200l2.200-2 1.600 3.600 1.300-.6-1.600-3.500h3z" fill="#000"/></svg>
<svg width="16" height="17" viewBox="0 0 16 17" style="left:1272px;top:876px;"><rect x="6.500" y="7.500" width="8" height="8" fill="none" stroke="#000" stroke-dasharray="1 1" shape-rendering="crispEdges"/><path d="M6.500 1v5M14.500 1v5M7 3.500h7M11.500 1.500l2.500 2-2.500 2M.5 7.500h5M.5 15.500h5M3 8v7M1 12.500l2 2.500 2-2.500" fill="none" stroke="#000"/></svg>
<svg width="13" height="13" viewBox="0 0 13 13" style="left:1426px;top:882px;"><rect x="11" y="3" width="2" height="2" fill="#fff"/><rect x="10" y="2" width="2" height="2" fill="#a9bfe6"/><rect x="7" y="7" width="2" height="2" fill="#fff"/><rect x="6" y="6" width="2" height="2" fill="#a9bfe6"/><rect x="11" y="7" width="2" height="2" fill="#fff"/><rect x="10" y="6" width="2" height="2" fill="#a9bfe6"/><rect x="3" y="11" width="2" height="2" fill="#fff"/><rect x="2" y="10" width="2" height="2" fill="#a9bfe6"/><rect x="7" y="11" width="2" height="2" fill="#fff"/><rect x="6" y="10" width="2" height="2" fill="#a9bfe6"/><rect x="11" y="11" width="2" height="2" fill="#fff"/><rect x="10" y="10" width="2" height="2" fill="#a9bfe6"/></svg>
<div class="abs" style="left:252px;top:856px;width:1171px;height:1px;background:#000"></div>
<div class="abs" style="left:1422px;top:102px;width:1px;height:755px;background:#000"></div>
<div id="menu" class="abs"><div class="abs strip"></div>
<div class="abs hl" style="left:1px;top:163px;width:336px;height:23px"></div>
<div class="abs it" style="top:5px;letter-spacing:0.238px"><u>N</u>ew...</div>
<div class="abs sc" style="top:5px">Ctrl+N</div>
<div class="abs it" style="top:28px;letter-spacing:0.131px"><u>O</u>pen...</div>
<div class="abs sc" style="top:28px">Ctrl+O</div>
<div class="abs it" style="top:51px;letter-spacing:-0.475px"><u>C</u>lose</div>
<div class="abs sc" style="top:51px">Ctrl+F4</div>
<div class="abs it" style="top:74px;letter-spacing:0.014px">Import Word Docu<u>m</u>ent...</div>
<div class="abs it" style="top:99px;letter-spacing:-0.331px"><u>S</u>ave</div>
<div class="abs sc" style="top:99px">Ctrl+S</div>
<div class="abs it" style="top:122px;letter-spacing:0.047px">Save <u>A</u>s...</div>
<div class="abs it" style="top:145px;letter-spacing:0.009px">Publish <u>t</u>o the Web...</div>
<div class="abs it" style="top:168px;letter-spacing:-0.441px">Pac<u>k</u> and Go</div>
<div class="abs it" style="top:193px;letter-spacing:-0.009px">Con<u>v</u>ert to Web Publication...</div>
<div class="abs it" style="top:216px;letter-spacing:-0.36px">Pu<u>b</u>lish as PDF or XPS...</div>
<div class="abs it" style="top:241px;letter-spacing:-0.209px"><u>W</u>eb Page Preview</div>
<div class="abs it" style="top:266px;letter-spacing:-0.032px">Page Set<u>u</u>p...</div>
<div class="abs it" style="top:289px;letter-spacing:0.047px">P<u>r</u>int Setup...</div>
<div class="abs it" style="top:312px;letter-spacing:-0.158px">Print Pre<u>v</u>iew</div>
<div class="abs it" style="top:335px;letter-spacing:0.151px"><u>P</u>rint...</div>
<div class="abs sc" style="top:335px">Ctrl+P</div>
<div class="abs it" style="top:360px;letter-spacing:-0.447px">Sen<u>d</u> E-mail</div>
<div class="abs it" style="top:383px;letter-spacing:-0.154px">Propert<u>i</u>es</div>
<div class="abs it" style="top:408px;letter-spacing:0.063px"><u>1</u> C:\Documents and Settings\my...\everydoordirect.pub</div>
<div class="abs it" style="top:431px;letter-spacing:0.063px"><u>2</u> C:\Documents and Settings\my...\everydoordirect.pub</div>
<div class="abs it" style="top:456px;letter-spacing:-0.209px">E<u>x</u>it</div>
<div class="abs sc" style="top:456px">Alt+F4</div>
<div class="abs sep" style="top:92px"></div>
<div class="abs sep" style="top:234px"></div>
<div class="abs sep" style="top:259px"></div>
<div class="abs sep" style="top:353px"></div>
<div class="abs sep" style="top:401px"></div>
<div class="abs sep" style="top:449px"></div>
<svg width="4" height="7" viewBox="0 0 4 7" style="left:326px;top:171px;"><path d="M0 0v7l4-3.5z" fill="#000"/></svg>
<svg width="4" height="7" viewBox="0 0 4 7" style="left:326px;top:363px;"><path d="M0 0v7l4-3.5z" fill="#000"/></svg>
<svg width="16" height="16" viewBox="0 0 16 16" style="left:4px;top:3px;"><path d="M2.5 1.5h6.5l3.5 3.5v9.500h-10z" fill="url(#gPage)" stroke="#7f8fb8"/><path d="M2.5 14.5h10v-9.500" fill="none" stroke="#27376b"/><path d="M9 1.500v3.500h3.500" fill="#dfe5f5" stroke="#27376b" stroke-width=".8"/></svg>
<svg width="16" height="16" viewBox="0 0 16 16" style="left:4px;top:26px;"><path d="M.5 14v-10.500h4.500l1 1.500h6v3" fill="#f8e6a0" stroke="#9a7a2a"/><path d="M.5 14l3-6h12.300l-3.500 6z" fill="url(#gFold)" stroke="#6a4c10"/><path d="M.5 14.200h12" stroke="#3a2a05" stroke-width=".8"/><path d="M9 3c1.600-2.300 4.400-2 5.500.3" fill="none" stroke="#3f5f9f" stroke-width="1.100"/><path d="M15.800 1.500l-.3 3.600-3-1.500z" fill="#3f5f9f"/></svg>
<svg width="16" height="16" viewBox="0 0 16 16" style="left:4px;top:50px;"><path d="M.5 13.500v-10.500h4.500l1 1.500h7.500v9z" fill="url(#gFold)" stroke="#7a5a14"/><path d="M.5 13.600h13" stroke="#3d2a05"/><path d="M15.700 4.600l-3-3" stroke="#2f3f6f" stroke-width="1.200"/><path d="M11.800 .5h3.400v1h-2.400v2.400h-1z" fill="#2f3f6f"/></svg>
<svg width="16" height="16" viewBox="0 0 16 16" style="left:4px;top:97px;"><rect x="1.500" y="1.500" width="13" height="13" rx="1" fill="url(#gFlop)" stroke="#5a5ec4"/><rect x="4" y="2" width="8" height="6" fill="#fff"/><rect x="4" y="2" width="8" height="6" fill="url(#gPage)" opacity=".6"/><rect x="4.500" y="10" width="7.500" height="4.500" fill="#23245e"/><rect x="8.500" y="11" width="2.500" height="3" fill="#f2f2fa"/></svg>
<svg width="16" height="16" viewBox="0 0 16 16" style="left:4px;top:120px;"><rect x=".5" y="1.500" width="13" height="13" rx="1" fill="url(#gFlop)" stroke="#5a5ec4"/><rect x="3" y="2" width="8" height="6" fill="#fff"/><path d="M4 3.500h6M4 5.500h4" stroke="#555" stroke-width=".8"/><rect x="3.500" y="10" width="7.500" height="4.500" fill="#23245e"/><rect x="7.500" y="11" width="2.500" height="3" fill="#f2f2fa"/><path d="M6 5.500l1.500-1 7 7.500-2 2-7-7z" fill="#f3d37a" stroke="#6a5220" stroke-width=".8"/><path d="M13 14l2-2 1 1.200-1.800 1.800z" fill="#e8806a" stroke="#9a4a3a" stroke-width=".6"/><path d="M5.500 5.500l.3 2 1.600-1.600z" fill="#222"/></svg>
<svg width="16" height="16" viewBox="0 0 16 16" style="left:4px;top:143px;"><circle cx="7" cy="7.500" r="6" fill="url(#gGlobe)" stroke="#2a5a9a" stroke-width=".6"/><path d="M3 4c1.500-2 4-2.500 5-2-.5 1.500-1 2-2 2.500s-.5 2-2 2.500-1.500-1.500-1-3zM8 8c1.500-1 3-1 4 0 .5 1.500-.5 3-2 4.500-1.500 0-2.500-3-2-4.500zM2.500 9.500c1 .5 2 1.500 2 3-1-.5-2-1.500-2-3z" fill="#3cae3c"/><path d="M8 8.200l6.500 2.500-2.500 1 2.300 2.600-1.300 1.200-2.300-2.700-1.200 2.200z" fill="#56c040" stroke="#1f5f1f" stroke-width=".8"/></svg>
<svg width="16" height="16" viewBox="0 0 16 16" style="left:4px;top:214px;"><path d="M2.5 1.5h6.5l3.5 3.5v9.500h-10z" fill="url(#gPage)" stroke="#7f8fb8"/><path d="M2.5 14.5h10v-9.500" fill="none" stroke="#27376b"/><path d="M9 1.500v3.500h3.500" fill="#dfe5f5" stroke="#27376b" stroke-width=".8"/><rect x=".5" y="8" width="14" height="2.400" fill="#f4d23a" stroke="#b8921a" stroke-width=".6"/><rect x="5" y="6.800" width="5" height="5" rx=".6" fill="#f0a820" stroke="#a86a10" stroke-width=".8"/><rect x="6.800" y="8.600" width="1.400" height="1.400" fill="#fff3b0"/></svg>
<svg width="16" height="16" viewBox="0 0 16 16" style="left:4px;top:239px;"><g transform="translate(-2,0)"><path d="M2.5 1.5h6.5l3.5 3.5v9.500h-10z" fill="url(#gPage)" stroke="#7f8fb8"/><path d="M2.5 14.5h10v-9.500" fill="none" stroke="#27376b"/><path d="M9 1.500v3.500h3.500" fill="#dfe5f5" stroke="#27376b" stroke-width=".8"/></g><circle cx="4.500" cy="8" r="3.200" fill="#3cae5c" stroke="#2a8a4a" stroke-width=".5"/><path d="M1.500 8.500c1-.5 2 .5 2.500 0" stroke="#3a7ad0" fill="none"/><path d="M10.6 11.6l3.200 3.200" stroke="#c8862a" stroke-width="2.600" stroke-linecap="round"/><path d="M12.4 13.4l1.400 1.400" stroke="#f3b552" stroke-width="1.400" stroke-linecap="round"/><circle cx="8.5" cy="9.5" r="3" fill="url(#gLens)" stroke="#6f7f9f" stroke-width="1.200"/></svg>
<svg width="16" height="16" viewBox="0 0 16 16" style="left:4px;top:287px;"><path d="M2.500 1.500h6.500l3.500 3.500v9.500h-10z" fill="url(#gPage)" stroke="#c040b0"/><path d="M2.500 14.500h10v-9.500" fill="none" stroke="#27376b"/><path d="M9 1.500l3.500 3.500" stroke="#27376b"/><path d="M4.500 1.500v13M10.500 3.500v11M2.500 3.500h7M2.500 12.500h10" stroke="#b030a0" stroke-width="1" fill="none"/></svg>
<svg width="16" height="16" viewBox="0 0 16 16" style="left:4px;top:310px;"><g transform="translate(-1,0)"><path d="M2.5 1.5h6.5l3.5 3.5v9.500h-10z" fill="url(#gPage)" stroke="#7f8fb8"/><path d="M2.5 14.5h10v-9.500" fill="none" stroke="#27376b"/><path d="M9 1.500v3.500h3.500" fill="#dfe5f5" stroke="#27376b" stroke-width=".8"/></g><path d="M10.74 10.24l3.200 3.200" stroke="#c8862a" stroke-width="2.600" stroke-linecap="round"/><path d="M12.540000000000001 12.040000000000001l1.400 1.400" stroke="#f3b552" stroke-width="1.400" stroke-linecap="round"/><circle cx="8.5" cy="8" r="3.2" fill="url(#gLens)" stroke="#6f7f9f" stroke-width="1.200"/></svg>
<svg width="16" height="16" viewBox="0 0 16 16" style="left:4px;top:334px;"><rect x="5" y="1" width="6.500" height="5" fill="#fff" stroke="#8a8fa0" stroke-width=".8"/><rect x="1" y="5" width="14.500" height="7.500" rx="1.500" fill="url(#gGray)" stroke="#5a5d68" stroke-width=".8"/><rect x="4" y="7.800" width="8" height="1.600" fill="#7fa8e0"/><rect x="5" y="10.500" width="6.500" height="5" fill="#fff" stroke="#6a7aa8" stroke-width=".8"/><rect x="7.500" y="12" width="1.500" height="1.500" fill="#3a5ab0"/></svg>
<svg width="16" height="16" viewBox="0 0 16 16" style="left:4px;top:454px;"><path d="M2 2l11.500 11.500M13.500 2L2 13.500" stroke="#4a4a4a" stroke-width="1.800"/></svg>
</div>
<div id="sub" class="abs"><div class="abs" style="left:1px;top:1px;width:24px;height:22px;background:#e9eeee"></div>
<div class="abs hl" style="left:1px;top:23px;width:254px;height:23px"></div>
<div class="abs it" style="top:5px;letter-spacing:0.097px">Take to Another <u>C</u>omputer...</div>
<div class="abs it" style="top:28px;letter-spacing:-0.141px">Take to a Commercial <u>P</u>rinting Service...</div>
</div>
</div></body></html>
